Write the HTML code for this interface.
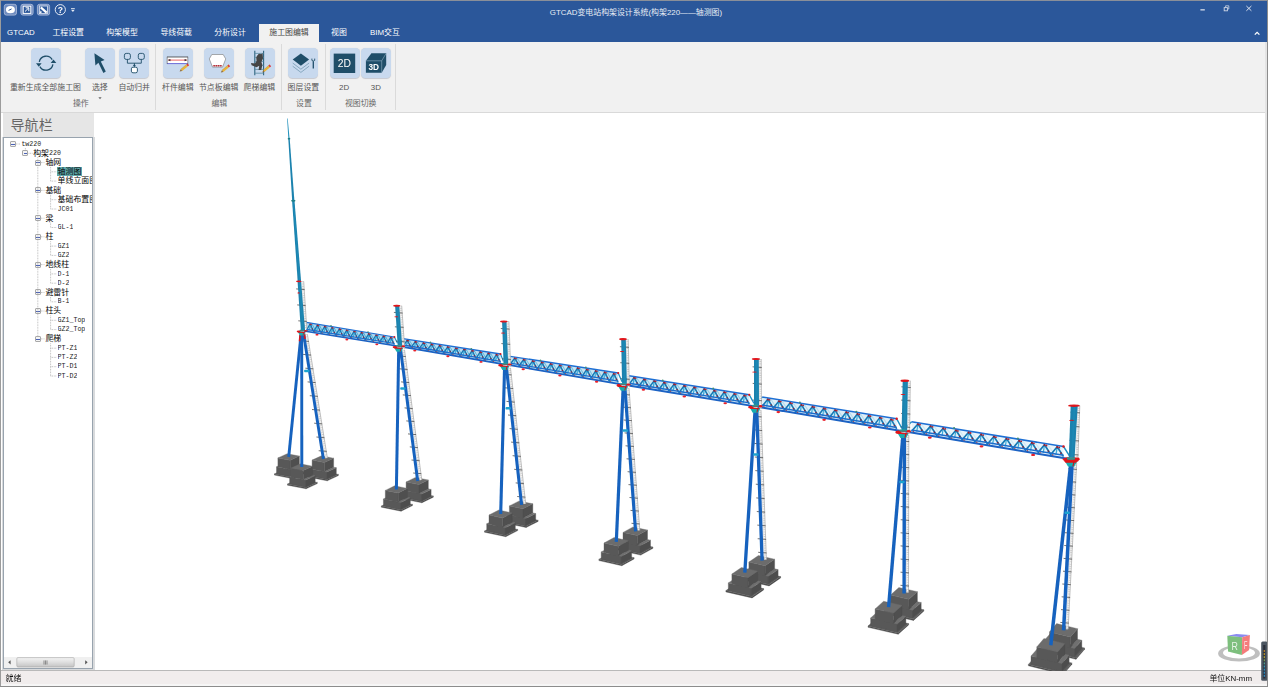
<!DOCTYPE html><html lang="zh-CN"><head><meta charset="utf-8"><title>GTCAD变电站构架设计系统</title><style>
*{box-sizing:border-box;margin:0;padding:0}
html,body{width:1268px;height:687px;overflow:hidden;background:#fff}
body{font-family:"Liberation Sans","Noto Sans CJK SC",sans-serif;font-size:7.9px;color:#444;position:relative;line-height:1}
.abs{position:absolute}
#title{left:0;top:0;width:1268px;height:42px;background:#2b579a}
#topline{left:0;top:0;width:1268px;height:1px;background:#8a8f99}
.tab{position:absolute;top:24px;height:18px;line-height:17.6px;color:#fff;white-space:nowrap;font-size:7.9px}
.tab.act{background:#f1f1f1;color:#444;text-align:center}
#ttl{position:absolute;top:7px;left:436px;width:400px;text-align:center;color:#e8edf5;font-size:7.9px;line-height:11px;white-space:nowrap}
#ribbon{left:1px;top:42px;width:1266px;height:70.8px;background:#f1f1f1;border-bottom:1px solid #d9d9d9}
.ib{position:absolute;top:48px;width:30px;height:30px;border-radius:4.5px;background:#c8d9ee;box-shadow:0 0.6px 0.8px rgba(120,130,150,.35)}
.il{position:absolute;top:81.7px;height:11px;line-height:11px;text-align:center;white-space:nowrap;color:#555;font-size:7.9px}
.gl{position:absolute;top:97.9px;height:11px;line-height:11px;text-align:center;white-space:nowrap;color:#666;font-size:7.9px}
.sep{position:absolute;top:44.4px;width:1px;height:66px;background:#dadada}
#navhead{left:2.5px;top:112.8px;width:91.5px;height:24.7px;background:#e6e6e6}
#navtitle{left:10.5px;top:116px;font-size:14px;line-height:18px;color:#666;white-space:nowrap;letter-spacing:0.1px}
#navbody{left:2px;top:137px;width:93px;height:533px;background:#d8dadc}
#tree{left:3px;top:137px;width:90px;height:532px;background:#fff;border:1px solid #98a3ae;overflow:hidden}
.tr{position:absolute;height:9.3px;line-height:9.3px;font-size:7.9px;color:#000;white-space:nowrap;font-family:"Liberation Mono","Noto Sans CJK SC",monospace}
.tr i{font-style:normal;font-family:"Liberation Mono",monospace;font-size:6.6px;letter-spacing:0;position:relative;top:-0.7px;color:#1a1a1a}
.sel{background:#5fa8ab;margin-left:-0.8px;padding:0 0.9px 0 0.8px}
.eb{position:absolute;width:6px;height:6px;border:0.8px solid #a9a9a9;border-radius:1px;background:#f4f4f4}
.eb:after{content:"";position:absolute;left:0.7px;top:1.9px;width:3.2px;height:0.9px;background:#4a62b8}
#status{left:1px;top:670px;width:1266px;height:16px;background:#f1eded;border-top:1px solid #b9b9b9}
#status2{left:1px;top:683.5px;width:1266px;height:2.5px;background:#f6f6f6}
.st{position:absolute;top:672.5px;height:11px;line-height:11px;font-size:7.9px;color:#111;white-space:nowrap}
#bl{left:0;top:0;width:1px;height:687px;background:#9c9c9c}
#br{left:1267px;top:0;width:1px;height:687px;background:#8c8c8c}
#bb{left:0;top:686px;width:1268px;height:1px;background:#8c8c8c}
#view{left:95px;top:112.8px;width:1170px;height:557.2px;background:#fff}
#rstrip{left:1265px;top:42px;width:2px;height:628px;background:#e4e4e4}
svg{position:absolute;left:0;top:0}
</style></head><body>
<div id="title" class="abs"></div>
<div id="ttl">GTCAD变电站构架设计系统(构架220——轴测图)</div>
<div class="tab" style="left:-9.1px;width:60px;text-align:center">GTCAD</div>
<div class="tab" style="left:38.2px;width:60px;text-align:center">工程设置</div>
<div class="tab" style="left:92.0px;width:60px;text-align:center">构架模型</div>
<div class="tab" style="left:146.2px;width:60px;text-align:center">导线荷载</div>
<div class="tab" style="left:200.1px;width:60px;text-align:center">分析设计</div>
<div class="tab" style="left:308.9px;width:60px;text-align:center">视图</div>
<div class="tab" style="left:355.0px;width:60px;text-align:center">BIM交互</div>
<div class="tab act" style="left:259px;width:60px">施工图编辑</div>
<div id="ribbon" class="abs"></div>
<div class="ib" style="left:31px"></div>
<div class="ib" style="left:85px"></div>
<div class="ib" style="left:119.3px"></div>
<div class="ib" style="left:163px"></div>
<div class="ib" style="left:204px"></div>
<div class="ib" style="left:245px"></div>
<div class="ib" style="left:288.4px"></div>
<div class="ib" style="left:329.5px"></div>
<div class="ib" style="left:361px"></div>
<div class="il" style="left:-4.6px;width:100px">重新生成全部施工图</div>
<div class="il" style="left:49.8px;width:100px">选择</div>
<div class="il" style="left:84.2px;width:100px">自动归并</div>
<div class="il" style="left:127.8px;width:100px">杆件编辑</div>
<div class="il" style="left:168.7px;width:100px">节点板编辑</div>
<div class="il" style="left:209.4px;width:100px">爬梯编辑</div>
<div class="il" style="left:253.4px;width:100px">图层设置</div>
<div class="il" style="left:294.1px;width:100px">2D</div>
<div class="il" style="left:325.8px;width:100px">3D</div>
<div class="gl" style="left:40.8px;width:80px">操作</div>
<div class="gl" style="left:179.3px;width:80px">编辑</div>
<div class="gl" style="left:263.9px;width:80px">设置</div>
<div class="gl" style="left:320.7px;width:80px">视图切换</div>
<div class="sep" style="left:155px"></div>
<div class="sep" style="left:281px"></div>
<div class="sep" style="left:324.5px"></div>
<div class="sep" style="left:394.5px"></div>
<div id="view" class="abs"></div>
<div id="rstrip" class="abs"></div>
<div id="navbody" class="abs"></div>
<div id="navhead" class="abs"></div>
<div id="navtitle" class="abs">导航栏</div>
<div id="tree" class="abs"></div>
<div class="tr" style="left:21.4px;top:139.35px;"><i>tw220</i></div>
<div class="eb" style="left:9.8px;top:141.00px"></div>
<div class="tr" style="left:33.2px;top:148.63px;">构架<i>220</i></div>
<div class="eb" style="left:22.4px;top:150.28px"></div>
<div class="tr" style="left:45.4px;top:157.91px;">轴网</div>
<div class="eb" style="left:34.8px;top:159.56px"></div>
<div class="tr sel" style="left:57.6px;top:167.19px;max-width:34.4px;overflow:hidden;">轴测图</div>
<div class="tr" style="left:57.6px;top:176.47px;max-width:34.4px;overflow:hidden;">单线立面图</div>
<div class="tr" style="left:45.4px;top:185.75px;">基础</div>
<div class="eb" style="left:34.8px;top:187.40px"></div>
<div class="tr" style="left:57.6px;top:195.03px;max-width:34.4px;overflow:hidden;">基础布置图</div>
<div class="tr" style="left:57.6px;top:204.31px;max-width:34.4px;overflow:hidden;"><i>JC01</i></div>
<div class="tr" style="left:45.4px;top:213.59px;">梁</div>
<div class="eb" style="left:34.8px;top:215.24px"></div>
<div class="tr" style="left:57.6px;top:222.87px;max-width:34.4px;overflow:hidden;"><i>GL-1</i></div>
<div class="tr" style="left:45.4px;top:232.15px;">柱</div>
<div class="eb" style="left:34.8px;top:233.80px"></div>
<div class="tr" style="left:57.6px;top:241.43px;max-width:34.4px;overflow:hidden;"><i>GZ1</i></div>
<div class="tr" style="left:57.6px;top:250.71px;max-width:34.4px;overflow:hidden;"><i>GZ2</i></div>
<div class="tr" style="left:45.4px;top:259.99px;">地线柱</div>
<div class="eb" style="left:34.8px;top:261.64px"></div>
<div class="tr" style="left:57.6px;top:269.27px;max-width:34.4px;overflow:hidden;"><i>D-1</i></div>
<div class="tr" style="left:57.6px;top:278.55px;max-width:34.4px;overflow:hidden;"><i>D-2</i></div>
<div class="tr" style="left:45.4px;top:287.83px;">避雷针</div>
<div class="eb" style="left:34.8px;top:289.48px"></div>
<div class="tr" style="left:57.6px;top:297.11px;max-width:34.4px;overflow:hidden;"><i>B-1</i></div>
<div class="tr" style="left:45.4px;top:306.39px;">柱头</div>
<div class="eb" style="left:34.8px;top:308.04px"></div>
<div class="tr" style="left:57.6px;top:315.67px;max-width:34.4px;overflow:hidden;"><i>GZ1_Top</i></div>
<div class="tr" style="left:57.6px;top:324.95px;max-width:34.4px;overflow:hidden;"><i>GZ2_Top</i></div>
<div class="tr" style="left:45.4px;top:334.23px;">爬梯</div>
<div class="eb" style="left:34.8px;top:335.88px"></div>
<div class="tr" style="left:57.6px;top:343.51px;max-width:34.4px;overflow:hidden;"><i>PT-Z1</i></div>
<div class="tr" style="left:57.6px;top:352.79px;max-width:34.4px;overflow:hidden;"><i>PT-Z2</i></div>
<div class="tr" style="left:57.6px;top:362.07px;max-width:34.4px;overflow:hidden;"><i>PT-D1</i></div>
<div class="tr" style="left:57.6px;top:371.35px;max-width:34.4px;overflow:hidden;"><i>PT-D2</i></div>
<div id="status" class="abs"></div><div id="status2" class="abs"></div>
<svg width="1268" height="687" viewBox="0 0 1268 687" >
<clipPath id="vp"><rect x="95" y="112.8" width="1170" height="557.6"/></clipPath><filter id="soft" x="0" y="0" width="1268" height="687" filterUnits="userSpaceOnUse"><feGaussianBlur stdDeviation="0.42"/></filter><g id="scene" clip-path="url(#vp)"><g filter="url(#soft)">
<g><polygon points="274.4,473.9 293.0,477.5 293.0,478.7 274.4,475.1" fill="#4e4e4e" stroke="#4e4e4e" stroke-width="0.35" stroke-linejoin="round"/><polygon points="293.0,477.5 304.2,472.2 304.2,473.5 293.0,478.7" fill="#474747" stroke="#474747" stroke-width="0.35" stroke-linejoin="round"/><polygon points="274.4,473.9 285.7,468.6 304.2,472.2 293.0,477.5" fill="#5c5c5c" stroke="#5c5c5c" stroke-width="0.35" stroke-linejoin="round"/><polygon points="276.5,466.8 292.7,469.9 292.7,476.8 276.5,473.7" fill="#585858" stroke="#585858" stroke-width="0.35" stroke-linejoin="round"/><polygon points="292.7,469.9 302.1,465.6 302.1,472.4 292.7,476.8" fill="#4e4e4e" stroke="#4e4e4e" stroke-width="0.35" stroke-linejoin="round"/><polygon points="276.5,466.8 285.9,462.4 287.3,462.7 277.9,467.1" fill="#707070" stroke="#707070" stroke-width="0.35" stroke-linejoin="round"/><polygon points="290.2,469.5 299.6,465.1 302.1,465.6 292.7,469.9" fill="#707070" stroke="#707070" stroke-width="0.35" stroke-linejoin="round"/><polygon points="277.9,457.9 290.2,460.3 290.2,469.5 277.9,467.1" fill="#595959" stroke="#595959" stroke-width="0.35" stroke-linejoin="round"/><polygon points="290.2,460.3 299.4,456.1 299.4,465.2 290.2,469.5" fill="#4f4f4f" stroke="#4f4f4f" stroke-width="0.35" stroke-linejoin="round"/><polygon points="277.9,457.9 287.2,453.7 299.4,456.1 290.2,460.3" fill="#6c6c6c" stroke="#6c6c6c" stroke-width="0.35" stroke-linejoin="round"/></g>
<g><polygon points="308.6,476.0 327.2,479.6 327.2,480.8 308.6,477.2" fill="#4e4e4e" stroke="#4e4e4e" stroke-width="0.35" stroke-linejoin="round"/><polygon points="327.2,479.6 338.4,474.4 338.4,475.6 327.2,480.8" fill="#474747" stroke="#474747" stroke-width="0.35" stroke-linejoin="round"/><polygon points="308.6,476.0 319.9,470.7 338.4,474.4 327.2,479.6" fill="#5c5c5c" stroke="#5c5c5c" stroke-width="0.35" stroke-linejoin="round"/><polygon points="310.7,468.9 326.9,472.0 326.9,478.9 310.7,475.8" fill="#585858" stroke="#585858" stroke-width="0.35" stroke-linejoin="round"/><polygon points="326.9,472.0 336.3,467.7 336.3,474.5 326.9,478.9" fill="#4e4e4e" stroke="#4e4e4e" stroke-width="0.35" stroke-linejoin="round"/><polygon points="310.7,468.9 320.1,464.5 321.5,464.8 312.1,469.2" fill="#707070" stroke="#707070" stroke-width="0.35" stroke-linejoin="round"/><polygon points="324.4,471.6 333.8,467.2 336.3,467.7 326.9,472.0" fill="#707070" stroke="#707070" stroke-width="0.35" stroke-linejoin="round"/><polygon points="312.1,460.1 324.4,462.4 324.4,471.6 312.1,469.2" fill="#595959" stroke="#595959" stroke-width="0.35" stroke-linejoin="round"/><polygon points="324.4,462.4 333.6,458.2 333.6,467.3 324.4,471.6" fill="#4f4f4f" stroke="#4f4f4f" stroke-width="0.35" stroke-linejoin="round"/><polygon points="312.1,460.1 321.4,455.8 333.6,458.2 324.4,462.4" fill="#6c6c6c" stroke="#6c6c6c" stroke-width="0.35" stroke-linejoin="round"/></g>
<g><polygon points="287.5,484.0 306.1,487.6 306.1,488.8 287.5,485.2" fill="#4e4e4e" stroke="#4e4e4e" stroke-width="0.35" stroke-linejoin="round"/><polygon points="306.1,487.6 317.3,482.4 317.3,483.6 306.1,488.8" fill="#474747" stroke="#474747" stroke-width="0.35" stroke-linejoin="round"/><polygon points="287.5,484.0 298.8,478.7 317.3,482.4 306.1,487.6" fill="#5c5c5c" stroke="#5c5c5c" stroke-width="0.35" stroke-linejoin="round"/><polygon points="289.6,476.9 305.8,480.0 305.8,486.9 289.6,483.8" fill="#585858" stroke="#585858" stroke-width="0.35" stroke-linejoin="round"/><polygon points="305.8,480.0 315.2,475.7 315.2,482.5 305.8,486.9" fill="#4e4e4e" stroke="#4e4e4e" stroke-width="0.35" stroke-linejoin="round"/><polygon points="289.6,476.9 299.0,472.5 300.4,472.8 291.1,477.2" fill="#707070" stroke="#707070" stroke-width="0.35" stroke-linejoin="round"/><polygon points="303.3,479.6 312.7,475.2 315.2,475.7 305.8,480.0" fill="#707070" stroke="#707070" stroke-width="0.35" stroke-linejoin="round"/><polygon points="291.1,468.1 303.3,470.4 303.3,479.6 291.1,477.2" fill="#595959" stroke="#595959" stroke-width="0.35" stroke-linejoin="round"/><polygon points="303.3,470.4 312.6,466.2 312.6,475.3 303.3,479.6" fill="#4f4f4f" stroke="#4f4f4f" stroke-width="0.35" stroke-linejoin="round"/><polygon points="291.1,468.1 300.3,463.8 312.6,466.2 303.3,470.4" fill="#6c6c6c" stroke="#6c6c6c" stroke-width="0.35" stroke-linejoin="round"/></g>
<g><polygon points="402.1,497.7 421.9,501.6 421.9,502.8 402.1,498.8" fill="#4e4e4e" stroke="#4e4e4e" stroke-width="0.35" stroke-linejoin="round"/><polygon points="421.9,501.6 433.3,496.0 433.3,497.2 421.9,502.8" fill="#474747" stroke="#474747" stroke-width="0.35" stroke-linejoin="round"/><polygon points="402.1,497.7 413.5,492.0 433.3,496.0 421.9,501.6" fill="#5c5c5c" stroke="#5c5c5c" stroke-width="0.35" stroke-linejoin="round"/><polygon points="404.2,490.6 421.6,494.1 421.6,500.9 404.2,497.4" fill="#585858" stroke="#585858" stroke-width="0.35" stroke-linejoin="round"/><polygon points="421.6,494.1 431.1,489.4 431.1,496.2 421.6,500.9" fill="#4e4e4e" stroke="#4e4e4e" stroke-width="0.35" stroke-linejoin="round"/><polygon points="404.2,490.6 413.7,485.9 415.6,486.3 406.1,491.0" fill="#707070" stroke="#707070" stroke-width="0.35" stroke-linejoin="round"/><polygon points="419.0,493.6 428.5,488.9 431.1,489.4 421.6,494.1" fill="#707070" stroke="#707070" stroke-width="0.35" stroke-linejoin="round"/><polygon points="406.1,482.0 419.0,484.6 419.0,493.6 406.1,491.0" fill="#595959" stroke="#595959" stroke-width="0.35" stroke-linejoin="round"/><polygon points="419.0,484.6 428.3,480.0 428.3,489.0 419.0,493.6" fill="#4f4f4f" stroke="#4f4f4f" stroke-width="0.35" stroke-linejoin="round"/><polygon points="406.1,482.0 415.4,477.4 428.3,480.0 419.0,484.6" fill="#6c6c6c" stroke="#6c6c6c" stroke-width="0.35" stroke-linejoin="round"/></g>
<g><polygon points="381.3,506.1 401.1,510.0 401.1,511.2 381.3,507.2" fill="#4e4e4e" stroke="#4e4e4e" stroke-width="0.35" stroke-linejoin="round"/><polygon points="401.1,510.0 412.5,504.4 412.5,505.6 401.1,511.2" fill="#474747" stroke="#474747" stroke-width="0.35" stroke-linejoin="round"/><polygon points="381.3,506.1 392.7,500.4 412.5,504.4 401.1,510.0" fill="#5c5c5c" stroke="#5c5c5c" stroke-width="0.35" stroke-linejoin="round"/><polygon points="383.4,499.0 400.8,502.5 400.8,509.3 383.4,505.8" fill="#585858" stroke="#585858" stroke-width="0.35" stroke-linejoin="round"/><polygon points="400.8,502.5 410.3,497.8 410.3,504.6 400.8,509.3" fill="#4e4e4e" stroke="#4e4e4e" stroke-width="0.35" stroke-linejoin="round"/><polygon points="383.4,499.0 392.9,494.3 394.8,494.7 385.3,499.4" fill="#707070" stroke="#707070" stroke-width="0.35" stroke-linejoin="round"/><polygon points="398.2,502.0 407.7,497.3 410.3,497.8 400.8,502.5" fill="#707070" stroke="#707070" stroke-width="0.35" stroke-linejoin="round"/><polygon points="385.3,490.4 398.2,493.0 398.2,502.0 385.3,499.4" fill="#595959" stroke="#595959" stroke-width="0.35" stroke-linejoin="round"/><polygon points="398.2,493.0 407.5,488.4 407.5,497.4 398.2,502.0" fill="#4f4f4f" stroke="#4f4f4f" stroke-width="0.35" stroke-linejoin="round"/><polygon points="385.3,490.4 394.6,485.8 407.5,488.4 398.2,493.0" fill="#6c6c6c" stroke="#6c6c6c" stroke-width="0.35" stroke-linejoin="round"/></g>
<g><polygon points="504.9,521.8 526.1,526.3 526.1,527.5 504.9,523.0" fill="#4e4e4e" stroke="#4e4e4e" stroke-width="0.35" stroke-linejoin="round"/><polygon points="526.1,526.3 538.1,520.2 538.1,521.4 526.1,527.5" fill="#474747" stroke="#474747" stroke-width="0.35" stroke-linejoin="round"/><polygon points="504.9,521.8 516.8,515.7 538.1,520.2 526.1,526.3" fill="#5c5c5c" stroke="#5c5c5c" stroke-width="0.35" stroke-linejoin="round"/><polygon points="507.1,514.6 525.7,518.6 525.7,525.5 507.1,521.5" fill="#585858" stroke="#585858" stroke-width="0.35" stroke-linejoin="round"/><polygon points="525.7,518.6 535.7,513.5 535.7,520.4 525.7,525.5" fill="#4e4e4e" stroke="#4e4e4e" stroke-width="0.35" stroke-linejoin="round"/><polygon points="507.1,514.6 517.1,509.5 519.4,510.0 509.4,515.1" fill="#707070" stroke="#707070" stroke-width="0.35" stroke-linejoin="round"/><polygon points="523.0,518.0 533.0,512.9 535.7,513.5 525.7,518.6" fill="#707070" stroke="#707070" stroke-width="0.35" stroke-linejoin="round"/><polygon points="509.4,505.9 523.0,508.8 523.0,518.0 509.4,515.1" fill="#595959" stroke="#595959" stroke-width="0.35" stroke-linejoin="round"/><polygon points="523.0,508.8 532.8,503.8 532.8,513.0 523.0,518.0" fill="#4f4f4f" stroke="#4f4f4f" stroke-width="0.35" stroke-linejoin="round"/><polygon points="509.4,505.9 519.2,500.9 532.8,503.8 523.0,508.8" fill="#6c6c6c" stroke="#6c6c6c" stroke-width="0.35" stroke-linejoin="round"/></g>
<g><polygon points="484.5,531.0 505.7,535.5 505.7,536.7 484.5,532.2" fill="#4e4e4e" stroke="#4e4e4e" stroke-width="0.35" stroke-linejoin="round"/><polygon points="505.7,535.5 517.7,529.4 517.7,530.6 505.7,536.7" fill="#474747" stroke="#474747" stroke-width="0.35" stroke-linejoin="round"/><polygon points="484.5,531.0 496.4,524.9 517.7,529.4 505.7,535.5" fill="#5c5c5c" stroke="#5c5c5c" stroke-width="0.35" stroke-linejoin="round"/><polygon points="486.7,523.8 505.3,527.8 505.3,534.7 486.7,530.7" fill="#585858" stroke="#585858" stroke-width="0.35" stroke-linejoin="round"/><polygon points="505.3,527.8 515.3,522.7 515.3,529.6 505.3,534.7" fill="#4e4e4e" stroke="#4e4e4e" stroke-width="0.35" stroke-linejoin="round"/><polygon points="486.7,523.8 496.7,518.7 499.0,519.2 489.0,524.3" fill="#707070" stroke="#707070" stroke-width="0.35" stroke-linejoin="round"/><polygon points="502.6,527.2 512.6,522.1 515.3,522.7 505.3,527.8" fill="#707070" stroke="#707070" stroke-width="0.35" stroke-linejoin="round"/><polygon points="489.0,515.0 502.6,518.0 502.6,527.2 489.0,524.3" fill="#595959" stroke="#595959" stroke-width="0.35" stroke-linejoin="round"/><polygon points="502.6,518.0 512.4,513.0 512.4,522.2 502.6,527.2" fill="#4f4f4f" stroke="#4f4f4f" stroke-width="0.35" stroke-linejoin="round"/><polygon points="489.0,515.0 498.8,510.0 512.4,513.0 502.6,518.0" fill="#6c6c6c" stroke="#6c6c6c" stroke-width="0.35" stroke-linejoin="round"/></g>
<g><polygon points="617.8,548.7 640.7,553.8 640.7,555.1 617.8,550.0" fill="#4e4e4e" stroke="#4e4e4e" stroke-width="0.35" stroke-linejoin="round"/><polygon points="640.7,553.8 653.0,547.1 653.0,548.3 640.7,555.1" fill="#474747" stroke="#474747" stroke-width="0.35" stroke-linejoin="round"/><polygon points="617.8,548.7 630.1,542.0 653.0,547.1 640.7,553.8" fill="#5c5c5c" stroke="#5c5c5c" stroke-width="0.35" stroke-linejoin="round"/><polygon points="620.1,541.3 640.2,545.8 640.2,552.9 620.1,548.5" fill="#585858" stroke="#585858" stroke-width="0.35" stroke-linejoin="round"/><polygon points="640.2,545.8 650.5,540.2 650.5,547.3 640.2,552.9" fill="#4e4e4e" stroke="#4e4e4e" stroke-width="0.35" stroke-linejoin="round"/><polygon points="620.1,541.3 630.4,535.7 633.3,536.3 623.0,541.9" fill="#707070" stroke="#707070" stroke-width="0.35" stroke-linejoin="round"/><polygon points="637.4,545.1 647.7,539.5 650.5,540.2 640.2,545.8" fill="#707070" stroke="#707070" stroke-width="0.35" stroke-linejoin="round"/><polygon points="623.0,532.4 637.4,535.6 637.4,545.1 623.0,541.9" fill="#595959" stroke="#595959" stroke-width="0.35" stroke-linejoin="round"/><polygon points="637.4,535.6 647.5,530.1 647.5,539.6 637.4,545.1" fill="#4f4f4f" stroke="#4f4f4f" stroke-width="0.35" stroke-linejoin="round"/><polygon points="623.0,532.4 633.0,526.9 647.5,530.1 637.4,535.6" fill="#6c6c6c" stroke="#6c6c6c" stroke-width="0.35" stroke-linejoin="round"/></g>
<g><polygon points="598.9,559.3 621.8,564.4 621.8,565.7 598.9,560.6" fill="#4e4e4e" stroke="#4e4e4e" stroke-width="0.35" stroke-linejoin="round"/><polygon points="621.8,564.4 634.1,557.7 634.1,558.9 621.8,565.7" fill="#474747" stroke="#474747" stroke-width="0.35" stroke-linejoin="round"/><polygon points="598.9,559.3 611.2,552.6 634.1,557.7 621.8,564.4" fill="#5c5c5c" stroke="#5c5c5c" stroke-width="0.35" stroke-linejoin="round"/><polygon points="601.2,551.9 621.3,556.4 621.3,563.5 601.2,559.1" fill="#585858" stroke="#585858" stroke-width="0.35" stroke-linejoin="round"/><polygon points="621.3,556.4 631.6,550.8 631.6,557.9 621.3,563.5" fill="#4e4e4e" stroke="#4e4e4e" stroke-width="0.35" stroke-linejoin="round"/><polygon points="601.2,551.9 611.5,546.3 614.4,546.9 604.0,552.5" fill="#707070" stroke="#707070" stroke-width="0.35" stroke-linejoin="round"/><polygon points="618.5,555.7 628.8,550.1 631.6,550.8 621.3,556.4" fill="#707070" stroke="#707070" stroke-width="0.35" stroke-linejoin="round"/><polygon points="604.0,543.0 618.5,546.2 618.5,555.7 604.0,552.5" fill="#595959" stroke="#595959" stroke-width="0.35" stroke-linejoin="round"/><polygon points="618.5,546.2 628.5,540.8 628.5,550.2 618.5,555.7" fill="#4f4f4f" stroke="#4f4f4f" stroke-width="0.35" stroke-linejoin="round"/><polygon points="604.0,543.0 614.1,537.5 628.5,540.8 618.5,546.2" fill="#6c6c6c" stroke="#6c6c6c" stroke-width="0.35" stroke-linejoin="round"/></g>
<g><polygon points="742.9,578.6 769.1,584.6 769.1,585.9 742.9,579.9" fill="#4e4e4e" stroke="#4e4e4e" stroke-width="0.35" stroke-linejoin="round"/><polygon points="769.1,584.6 780.6,576.6 780.6,577.9 769.1,585.9" fill="#474747" stroke="#474747" stroke-width="0.35" stroke-linejoin="round"/><polygon points="742.9,578.6 754.5,570.7 780.6,576.6 769.1,584.6" fill="#5c5c5c" stroke="#5c5c5c" stroke-width="0.35" stroke-linejoin="round"/><polygon points="745.3,570.9 768.4,576.2 768.4,583.6 745.3,578.3" fill="#585858" stroke="#585858" stroke-width="0.35" stroke-linejoin="round"/><polygon points="768.4,576.2 778.1,569.6 778.1,576.9 768.4,583.6" fill="#4e4e4e" stroke="#4e4e4e" stroke-width="0.35" stroke-linejoin="round"/><polygon points="745.3,570.9 755.0,564.3 758.6,565.1 748.9,571.8" fill="#707070" stroke="#707070" stroke-width="0.35" stroke-linejoin="round"/><polygon points="765.1,575.5 774.8,568.8 778.1,569.6 768.4,576.2" fill="#707070" stroke="#707070" stroke-width="0.35" stroke-linejoin="round"/><polygon points="748.9,562.0 765.1,565.7 765.1,575.5 748.9,571.8" fill="#595959" stroke="#595959" stroke-width="0.35" stroke-linejoin="round"/><polygon points="765.1,565.7 774.6,559.2 774.6,569.0 765.1,575.5" fill="#4f4f4f" stroke="#4f4f4f" stroke-width="0.35" stroke-linejoin="round"/><polygon points="748.9,562.0 758.4,555.5 774.6,559.2 765.1,565.7" fill="#6c6c6c" stroke="#6c6c6c" stroke-width="0.35" stroke-linejoin="round"/></g>
<g><polygon points="725.9,590.6 752.1,596.6 752.1,597.9 725.9,591.9" fill="#4e4e4e" stroke="#4e4e4e" stroke-width="0.35" stroke-linejoin="round"/><polygon points="752.1,596.6 763.6,588.6 763.6,589.9 752.1,597.9" fill="#474747" stroke="#474747" stroke-width="0.35" stroke-linejoin="round"/><polygon points="725.9,590.6 737.5,582.7 763.6,588.6 752.1,596.6" fill="#5c5c5c" stroke="#5c5c5c" stroke-width="0.35" stroke-linejoin="round"/><polygon points="728.3,582.9 751.4,588.2 751.4,595.6 728.3,590.3" fill="#585858" stroke="#585858" stroke-width="0.35" stroke-linejoin="round"/><polygon points="751.4,588.2 761.1,581.6 761.1,588.9 751.4,595.6" fill="#4e4e4e" stroke="#4e4e4e" stroke-width="0.35" stroke-linejoin="round"/><polygon points="728.3,582.9 738.0,576.3 741.6,577.1 731.9,583.8" fill="#707070" stroke="#707070" stroke-width="0.35" stroke-linejoin="round"/><polygon points="748.1,587.5 757.8,580.8 761.1,581.6 751.4,588.2" fill="#707070" stroke="#707070" stroke-width="0.35" stroke-linejoin="round"/><polygon points="731.9,574.0 748.1,577.7 748.1,587.5 731.9,583.8" fill="#595959" stroke="#595959" stroke-width="0.35" stroke-linejoin="round"/><polygon points="748.1,577.7 757.6,571.2 757.6,581.0 748.1,587.5" fill="#4f4f4f" stroke="#4f4f4f" stroke-width="0.35" stroke-linejoin="round"/><polygon points="731.9,574.0 741.4,567.5 757.6,571.2 748.1,577.7" fill="#6c6c6c" stroke="#6c6c6c" stroke-width="0.35" stroke-linejoin="round"/></g>
<g><polygon points="883.3,612.2 913.5,619.1 913.5,620.4 883.3,613.5" fill="#4e4e4e" stroke="#4e4e4e" stroke-width="0.35" stroke-linejoin="round"/><polygon points="913.5,619.1 923.9,609.8 923.9,611.1 913.5,620.4" fill="#474747" stroke="#474747" stroke-width="0.35" stroke-linejoin="round"/><polygon points="883.3,612.2 893.7,602.9 923.9,609.8 913.5,619.1" fill="#5c5c5c" stroke="#5c5c5c" stroke-width="0.35" stroke-linejoin="round"/><polygon points="885.9,604.2 912.5,610.3 912.5,617.9 885.9,611.8" fill="#585858" stroke="#585858" stroke-width="0.35" stroke-linejoin="round"/><polygon points="912.5,610.3 921.2,602.5 921.2,610.2 912.5,617.9" fill="#4e4e4e" stroke="#4e4e4e" stroke-width="0.35" stroke-linejoin="round"/><polygon points="885.9,604.2 894.5,596.4 899.1,597.5 890.4,605.2" fill="#707070" stroke="#707070" stroke-width="0.35" stroke-linejoin="round"/><polygon points="908.9,609.4 917.5,601.7 921.2,602.5 912.5,610.3" fill="#707070" stroke="#707070" stroke-width="0.35" stroke-linejoin="round"/><polygon points="890.4,595.1 908.9,599.3 908.9,609.4 890.4,605.2" fill="#595959" stroke="#595959" stroke-width="0.35" stroke-linejoin="round"/><polygon points="908.9,599.3 917.4,591.7 917.4,601.8 908.9,609.4" fill="#4f4f4f" stroke="#4f4f4f" stroke-width="0.35" stroke-linejoin="round"/><polygon points="890.4,595.1 898.9,587.5 917.4,591.7 908.9,599.3" fill="#6c6c6c" stroke="#6c6c6c" stroke-width="0.35" stroke-linejoin="round"/></g>
<g><polygon points="868.0,626.0 898.2,632.9 898.2,634.2 868.0,627.3" fill="#4e4e4e" stroke="#4e4e4e" stroke-width="0.35" stroke-linejoin="round"/><polygon points="898.2,632.9 908.6,623.6 908.6,624.9 898.2,634.2" fill="#474747" stroke="#474747" stroke-width="0.35" stroke-linejoin="round"/><polygon points="868.0,626.0 878.4,616.7 908.6,623.6 898.2,632.9" fill="#5c5c5c" stroke="#5c5c5c" stroke-width="0.35" stroke-linejoin="round"/><polygon points="870.6,618.0 897.2,624.1 897.2,631.7 870.6,625.6" fill="#585858" stroke="#585858" stroke-width="0.35" stroke-linejoin="round"/><polygon points="897.2,624.1 905.9,616.3 905.9,624.0 897.2,631.7" fill="#4e4e4e" stroke="#4e4e4e" stroke-width="0.35" stroke-linejoin="round"/><polygon points="870.6,618.0 879.2,610.2 883.8,611.3 875.1,619.0" fill="#707070" stroke="#707070" stroke-width="0.35" stroke-linejoin="round"/><polygon points="893.6,623.2 902.2,615.5 905.9,616.3 897.2,624.1" fill="#707070" stroke="#707070" stroke-width="0.35" stroke-linejoin="round"/><polygon points="875.1,608.9 893.6,613.1 893.6,623.2 875.1,619.0" fill="#595959" stroke="#595959" stroke-width="0.35" stroke-linejoin="round"/><polygon points="893.6,613.1 902.1,605.5 902.1,615.6 893.6,623.2" fill="#4f4f4f" stroke="#4f4f4f" stroke-width="0.35" stroke-linejoin="round"/><polygon points="875.1,608.9 883.6,601.3 902.1,605.5 893.6,613.1" fill="#6c6c6c" stroke="#6c6c6c" stroke-width="0.35" stroke-linejoin="round"/></g>
<g><polygon points="1041.1,649.4 1076.0,657.9 1076.0,659.3 1041.1,650.8" fill="#4e4e4e" stroke="#4e4e4e" stroke-width="0.35" stroke-linejoin="round"/><polygon points="1076.0,657.9 1084.6,647.9 1084.6,649.3 1076.0,659.3" fill="#474747" stroke="#474747" stroke-width="0.35" stroke-linejoin="round"/><polygon points="1041.1,649.4 1049.8,639.4 1084.6,647.9 1076.0,657.9" fill="#5c5c5c" stroke="#5c5c5c" stroke-width="0.35" stroke-linejoin="round"/><polygon points="1043.7,641.0 1074.6,648.6 1074.6,656.6 1043.7,649.0" fill="#585858" stroke="#585858" stroke-width="0.35" stroke-linejoin="round"/><polygon points="1074.6,648.6 1081.8,640.2 1081.8,648.2 1074.6,656.6" fill="#4e4e4e" stroke="#4e4e4e" stroke-width="0.35" stroke-linejoin="round"/><polygon points="1043.7,641.0 1051.0,632.7 1056.7,634.1 1049.5,642.5" fill="#707070" stroke="#707070" stroke-width="0.35" stroke-linejoin="round"/><polygon points="1070.4,647.5 1077.6,639.2 1081.8,640.2 1074.6,648.6" fill="#707070" stroke="#707070" stroke-width="0.35" stroke-linejoin="round"/><polygon points="1049.5,631.9 1070.4,636.9 1070.4,647.5 1049.5,642.5" fill="#595959" stroke="#595959" stroke-width="0.35" stroke-linejoin="round"/><polygon points="1070.4,636.9 1077.5,628.7 1077.5,639.3 1070.4,647.5" fill="#4f4f4f" stroke="#4f4f4f" stroke-width="0.35" stroke-linejoin="round"/><polygon points="1049.5,631.9 1056.6,623.6 1077.5,628.7 1070.4,636.9" fill="#6c6c6c" stroke="#6c6c6c" stroke-width="0.35" stroke-linejoin="round"/></g>
<g><polygon points="1028.4,664.4 1063.3,672.9 1063.3,674.3 1028.4,665.8" fill="#4e4e4e" stroke="#4e4e4e" stroke-width="0.35" stroke-linejoin="round"/><polygon points="1063.3,672.9 1071.9,662.9 1071.9,664.3 1063.3,674.3" fill="#474747" stroke="#474747" stroke-width="0.35" stroke-linejoin="round"/><polygon points="1028.4,664.4 1037.1,654.4 1071.9,662.9 1063.3,672.9" fill="#5c5c5c" stroke="#5c5c5c" stroke-width="0.35" stroke-linejoin="round"/><polygon points="1031.0,656.0 1061.9,663.6 1061.9,671.6 1031.0,664.0" fill="#585858" stroke="#585858" stroke-width="0.35" stroke-linejoin="round"/><polygon points="1061.9,663.6 1069.1,655.2 1069.1,663.2 1061.9,671.6" fill="#4e4e4e" stroke="#4e4e4e" stroke-width="0.35" stroke-linejoin="round"/><polygon points="1031.0,656.0 1038.3,647.7 1044.0,649.1 1036.8,657.5" fill="#707070" stroke="#707070" stroke-width="0.35" stroke-linejoin="round"/><polygon points="1057.7,662.5 1064.9,654.2 1069.1,655.2 1061.9,663.6" fill="#707070" stroke="#707070" stroke-width="0.35" stroke-linejoin="round"/><polygon points="1036.8,646.9 1057.7,651.9 1057.7,662.5 1036.8,657.5" fill="#595959" stroke="#595959" stroke-width="0.35" stroke-linejoin="round"/><polygon points="1057.7,651.9 1064.8,643.7 1064.8,654.3 1057.7,662.5" fill="#4f4f4f" stroke="#4f4f4f" stroke-width="0.35" stroke-linejoin="round"/><polygon points="1036.8,646.9 1043.9,638.6 1064.8,643.7 1057.7,651.9" fill="#6c6c6c" stroke="#6c6c6c" stroke-width="0.35" stroke-linejoin="round"/></g>
<line x1="301.2" y1="332.8" x2="288.7" y2="457.0" stroke="#1762be" stroke-width="2.9"/>
<line x1="306.4" y1="334.3" x2="326.4" y2="458.1" stroke="#f6f6f6" stroke-width="2.0"/><line x1="306.4" y1="334.3" x2="326.4" y2="458.1" stroke="#c4c4c4" stroke-width="2.0" stroke-dasharray="0.6 1.7"/><line x1="305.4" y1="334.3" x2="325.4" y2="458.1" stroke="#cfcfcf" stroke-width="0.5"/><line x1="307.4" y1="334.3" x2="327.4" y2="458.1" stroke="#a8a8a8" stroke-width="0.7"/><line x1="300.9" y1="340.7" x2="308.9" y2="341.4" stroke="#484848" stroke-width="0.9" opacity="0.85"/><line x1="303.1" y1="354.4" x2="311.1" y2="355.1" stroke="#484848" stroke-width="0.9" opacity="0.85"/><line x1="305.4" y1="368.2" x2="313.4" y2="368.9" stroke="#484848" stroke-width="0.9" opacity="0.85"/><line x1="307.6" y1="381.9" x2="315.6" y2="382.6" stroke="#484848" stroke-width="0.9" opacity="0.85"/><line x1="309.8" y1="395.7" x2="317.8" y2="396.4" stroke="#484848" stroke-width="0.9" opacity="0.85"/><line x1="312.0" y1="409.5" x2="320.0" y2="410.2" stroke="#484848" stroke-width="0.9" opacity="0.85"/><line x1="314.2" y1="423.2" x2="322.2" y2="423.9" stroke="#484848" stroke-width="0.9" opacity="0.85"/><line x1="316.4" y1="437.0" x2="324.4" y2="437.7" stroke="#484848" stroke-width="0.9" opacity="0.85"/><line x1="318.7" y1="450.7" x2="326.7" y2="451.4" stroke="#484848" stroke-width="0.9" opacity="0.85"/>
<line x1="303.4" y1="332.8" x2="323.4" y2="459.1" stroke="#1762be" stroke-width="2.9"/>
<line x1="301.7" y1="332.8" x2="301.8" y2="467.1" stroke="#1762be" stroke-width="2.9"/>
<rect x="304.1" y="369.7" width="5.4" height="2.5" rx="0.9" fill="#1fa3cf"/>
<line x1="300.1" y1="334.8" x2="299.5" y2="341.3" stroke="#d01820" stroke-width="1.6"/>
<line x1="304.2" y1="332.8" x2="305.0" y2="338.8" stroke="#d01820" stroke-width="1.8"/>
<line x1="403.5" y1="349.8" x2="420.8" y2="480.0" stroke="#f6f6f6" stroke-width="2.0"/><line x1="403.5" y1="349.8" x2="420.8" y2="480.0" stroke="#c4c4c4" stroke-width="2.0" stroke-dasharray="0.6 1.7"/><line x1="402.5" y1="349.8" x2="419.8" y2="480.0" stroke="#cfcfcf" stroke-width="0.5"/><line x1="404.5" y1="349.8" x2="421.8" y2="480.0" stroke="#a8a8a8" stroke-width="0.7"/><line x1="397.7" y1="355.8" x2="405.7" y2="356.5" stroke="#484848" stroke-width="0.9" opacity="0.85"/><line x1="399.4" y1="368.8" x2="407.5" y2="369.5" stroke="#484848" stroke-width="0.9" opacity="0.85"/><line x1="401.1" y1="381.9" x2="409.2" y2="382.6" stroke="#484848" stroke-width="0.9" opacity="0.85"/><line x1="402.8" y1="394.9" x2="410.9" y2="395.6" stroke="#484848" stroke-width="0.9" opacity="0.85"/><line x1="404.6" y1="407.9" x2="412.7" y2="408.6" stroke="#484848" stroke-width="0.9" opacity="0.85"/><line x1="406.3" y1="420.9" x2="414.4" y2="421.6" stroke="#484848" stroke-width="0.9" opacity="0.85"/><line x1="408.0" y1="433.9" x2="416.1" y2="434.6" stroke="#484848" stroke-width="0.9" opacity="0.85"/><line x1="409.8" y1="446.9" x2="417.8" y2="447.6" stroke="#484848" stroke-width="0.9" opacity="0.85"/><line x1="411.5" y1="460.0" x2="419.6" y2="460.7" stroke="#484848" stroke-width="0.9" opacity="0.85"/><line x1="413.2" y1="473.0" x2="421.3" y2="473.7" stroke="#484848" stroke-width="0.9" opacity="0.85"/>
<line x1="400.4" y1="348.3" x2="417.7" y2="481.0" stroke="#1762be" stroke-width="3.0"/>
<line x1="398.7" y1="348.3" x2="396.4" y2="489.4" stroke="#1762be" stroke-width="3.0"/>
<rect x="400.2" y="387.2" width="5.4" height="2.5" rx="0.9" fill="#1fa3cf"/>
<line x1="509.5" y1="367.9" x2="524.7" y2="503.8" stroke="#f6f6f6" stroke-width="2.0"/><line x1="509.5" y1="367.9" x2="524.7" y2="503.8" stroke="#c4c4c4" stroke-width="2.0" stroke-dasharray="0.6 1.7"/><line x1="508.5" y1="367.9" x2="523.7" y2="503.8" stroke="#cfcfcf" stroke-width="0.5"/><line x1="510.5" y1="367.9" x2="525.7" y2="503.8" stroke="#a8a8a8" stroke-width="0.7"/><line x1="503.5" y1="374.2" x2="511.6" y2="374.9" stroke="#484848" stroke-width="0.9" opacity="0.85"/><line x1="505.0" y1="387.8" x2="513.2" y2="388.5" stroke="#484848" stroke-width="0.9" opacity="0.85"/><line x1="506.5" y1="401.4" x2="514.7" y2="402.1" stroke="#484848" stroke-width="0.9" opacity="0.85"/><line x1="508.0" y1="415.0" x2="516.2" y2="415.7" stroke="#484848" stroke-width="0.9" opacity="0.85"/><line x1="509.6" y1="428.6" x2="517.7" y2="429.3" stroke="#484848" stroke-width="0.9" opacity="0.85"/><line x1="511.1" y1="442.1" x2="519.3" y2="442.8" stroke="#484848" stroke-width="0.9" opacity="0.85"/><line x1="512.6" y1="455.7" x2="520.8" y2="456.4" stroke="#484848" stroke-width="0.9" opacity="0.85"/><line x1="514.2" y1="469.3" x2="522.3" y2="470.0" stroke="#484848" stroke-width="0.9" opacity="0.85"/><line x1="515.7" y1="482.9" x2="523.8" y2="483.6" stroke="#484848" stroke-width="0.9" opacity="0.85"/><line x1="517.2" y1="496.5" x2="525.4" y2="497.2" stroke="#484848" stroke-width="0.9" opacity="0.85"/>
<line x1="506.3" y1="366.4" x2="521.6" y2="504.8" stroke="#1762be" stroke-width="3.1"/>
<line x1="504.6" y1="366.4" x2="500.7" y2="514.0" stroke="#1762be" stroke-width="3.1"/>
<rect x="505.5" y="407.1" width="5.4" height="2.5" rx="0.9" fill="#1fa3cf"/>
<line x1="628.0" y1="388.2" x2="638.8" y2="530.3" stroke="#f6f6f6" stroke-width="2.0"/><line x1="628.0" y1="388.2" x2="638.8" y2="530.3" stroke="#c4c4c4" stroke-width="2.0" stroke-dasharray="0.6 1.7"/><line x1="627.0" y1="388.2" x2="637.8" y2="530.3" stroke="#cfcfcf" stroke-width="0.5"/><line x1="629.0" y1="388.2" x2="639.8" y2="530.3" stroke="#a8a8a8" stroke-width="0.7"/><line x1="621.7" y1="394.2" x2="629.9" y2="394.9" stroke="#484848" stroke-width="0.9" opacity="0.85"/><line x1="622.7" y1="407.1" x2="630.9" y2="407.8" stroke="#484848" stroke-width="0.9" opacity="0.85"/><line x1="623.6" y1="420.0" x2="631.9" y2="420.7" stroke="#484848" stroke-width="0.9" opacity="0.85"/><line x1="624.6" y1="432.9" x2="632.9" y2="433.6" stroke="#484848" stroke-width="0.9" opacity="0.85"/><line x1="625.6" y1="445.8" x2="633.8" y2="446.5" stroke="#484848" stroke-width="0.9" opacity="0.85"/><line x1="626.6" y1="458.8" x2="634.8" y2="459.4" stroke="#484848" stroke-width="0.9" opacity="0.85"/><line x1="627.6" y1="471.7" x2="635.8" y2="472.4" stroke="#484848" stroke-width="0.9" opacity="0.85"/><line x1="628.5" y1="484.6" x2="636.8" y2="485.3" stroke="#484848" stroke-width="0.9" opacity="0.85"/><line x1="629.5" y1="497.5" x2="637.8" y2="498.2" stroke="#484848" stroke-width="0.9" opacity="0.85"/><line x1="630.5" y1="510.4" x2="638.8" y2="511.1" stroke="#484848" stroke-width="0.9" opacity="0.85"/><line x1="631.5" y1="523.3" x2="639.7" y2="524.0" stroke="#484848" stroke-width="0.9" opacity="0.85"/>
<line x1="624.8" y1="386.7" x2="635.6" y2="531.3" stroke="#1762be" stroke-width="3.2"/>
<line x1="623.2" y1="386.7" x2="616.3" y2="541.9" stroke="#1762be" stroke-width="3.2"/>
<rect x="622.7" y="429.3" width="5.4" height="2.5" rx="0.9" fill="#1fa3cf"/>
<line x1="760.0" y1="409.9" x2="765.4" y2="559.6" stroke="#f6f6f6" stroke-width="2.0"/><line x1="760.0" y1="409.9" x2="765.4" y2="559.6" stroke="#c4c4c4" stroke-width="2.0" stroke-dasharray="0.6 1.7"/><line x1="759.0" y1="409.9" x2="764.4" y2="559.6" stroke="#cfcfcf" stroke-width="0.5"/><line x1="761.0" y1="409.9" x2="766.4" y2="559.6" stroke="#a8a8a8" stroke-width="0.7"/><line x1="753.3" y1="416.2" x2="761.6" y2="416.9" stroke="#484848" stroke-width="0.9" opacity="0.85"/><line x1="753.8" y1="429.8" x2="762.1" y2="430.5" stroke="#484848" stroke-width="0.9" opacity="0.85"/><line x1="754.3" y1="443.4" x2="762.6" y2="444.1" stroke="#484848" stroke-width="0.9" opacity="0.85"/><line x1="754.8" y1="457.0" x2="763.1" y2="457.7" stroke="#484848" stroke-width="0.9" opacity="0.85"/><line x1="755.3" y1="470.6" x2="763.6" y2="471.3" stroke="#484848" stroke-width="0.9" opacity="0.85"/><line x1="755.8" y1="484.2" x2="764.1" y2="484.9" stroke="#484848" stroke-width="0.9" opacity="0.85"/><line x1="756.3" y1="497.9" x2="764.6" y2="498.6" stroke="#484848" stroke-width="0.9" opacity="0.85"/><line x1="756.8" y1="511.5" x2="765.1" y2="512.2" stroke="#484848" stroke-width="0.9" opacity="0.85"/><line x1="757.3" y1="525.1" x2="765.6" y2="525.8" stroke="#484848" stroke-width="0.9" opacity="0.85"/><line x1="757.7" y1="538.7" x2="766.1" y2="539.4" stroke="#484848" stroke-width="0.9" opacity="0.85"/><line x1="758.2" y1="552.3" x2="766.6" y2="553.0" stroke="#484848" stroke-width="0.9" opacity="0.85"/>
<line x1="756.7" y1="408.4" x2="762.1" y2="560.6" stroke="#1762be" stroke-width="3.3"/>
<line x1="755.2" y1="408.4" x2="744.8" y2="572.6" stroke="#1762be" stroke-width="3.3"/>
<rect x="753.1" y="453.3" width="5.4" height="2.5" rx="0.9" fill="#1fa3cf"/>
<line x1="907.8" y1="434.8" x2="907.5" y2="592.4" stroke="#f6f6f6" stroke-width="2.0"/><line x1="907.8" y1="434.8" x2="907.5" y2="592.4" stroke="#c4c4c4" stroke-width="2.0" stroke-dasharray="0.6 1.7"/><line x1="906.8" y1="434.8" x2="906.5" y2="592.4" stroke="#cfcfcf" stroke-width="0.5"/><line x1="908.8" y1="434.8" x2="908.5" y2="592.4" stroke="#a8a8a8" stroke-width="0.7"/><line x1="900.8" y1="440.9" x2="909.2" y2="441.6" stroke="#484848" stroke-width="0.9" opacity="0.85"/><line x1="900.8" y1="454.0" x2="909.2" y2="454.7" stroke="#484848" stroke-width="0.9" opacity="0.85"/><line x1="900.8" y1="467.1" x2="909.2" y2="467.8" stroke="#484848" stroke-width="0.9" opacity="0.85"/><line x1="900.7" y1="480.3" x2="909.1" y2="481.0" stroke="#484848" stroke-width="0.9" opacity="0.85"/><line x1="900.7" y1="493.4" x2="909.1" y2="494.1" stroke="#484848" stroke-width="0.9" opacity="0.85"/><line x1="900.7" y1="506.5" x2="909.1" y2="507.2" stroke="#484848" stroke-width="0.9" opacity="0.85"/><line x1="900.7" y1="519.7" x2="909.1" y2="520.4" stroke="#484848" stroke-width="0.9" opacity="0.85"/><line x1="900.6" y1="532.8" x2="909.0" y2="533.5" stroke="#484848" stroke-width="0.9" opacity="0.85"/><line x1="900.6" y1="545.9" x2="909.0" y2="546.6" stroke="#484848" stroke-width="0.9" opacity="0.85"/><line x1="900.6" y1="559.1" x2="909.0" y2="559.8" stroke="#484848" stroke-width="0.9" opacity="0.85"/><line x1="900.5" y1="572.2" x2="908.9" y2="572.9" stroke="#484848" stroke-width="0.9" opacity="0.85"/><line x1="900.5" y1="585.3" x2="908.9" y2="586.0" stroke="#484848" stroke-width="0.9" opacity="0.85"/>
<line x1="904.4" y1="433.3" x2="904.1" y2="593.4" stroke="#1762be" stroke-width="3.4"/>
<line x1="903.1" y1="433.3" x2="888.6" y2="607.2" stroke="#1762be" stroke-width="3.4"/>
<rect x="899.2" y="480.7" width="5.4" height="2.5" rx="0.9" fill="#1fa3cf"/>
<line x1="1075.7" y1="462.8" x2="1067.1" y2="629.3" stroke="#f6f6f6" stroke-width="2.0"/><line x1="1075.7" y1="462.8" x2="1067.1" y2="629.3" stroke="#c4c4c4" stroke-width="2.0" stroke-dasharray="0.6 1.7"/><line x1="1074.7" y1="462.8" x2="1066.1" y2="629.3" stroke="#cfcfcf" stroke-width="0.5"/><line x1="1076.7" y1="462.8" x2="1068.1" y2="629.3" stroke="#a8a8a8" stroke-width="0.7"/><line x1="1068.3" y1="468.7" x2="1076.8" y2="469.4" stroke="#484848" stroke-width="0.9" opacity="0.85"/><line x1="1067.6" y1="481.5" x2="1076.1" y2="482.2" stroke="#484848" stroke-width="0.9" opacity="0.85"/><line x1="1067.0" y1="494.3" x2="1075.4" y2="495.0" stroke="#484848" stroke-width="0.9" opacity="0.85"/><line x1="1066.3" y1="507.1" x2="1074.8" y2="507.8" stroke="#484848" stroke-width="0.9" opacity="0.85"/><line x1="1065.6" y1="519.9" x2="1074.1" y2="520.6" stroke="#484848" stroke-width="0.9" opacity="0.85"/><line x1="1065.0" y1="532.7" x2="1073.5" y2="533.4" stroke="#484848" stroke-width="0.9" opacity="0.85"/><line x1="1064.3" y1="545.5" x2="1072.8" y2="546.2" stroke="#484848" stroke-width="0.9" opacity="0.85"/><line x1="1063.6" y1="558.4" x2="1072.1" y2="559.1" stroke="#484848" stroke-width="0.9" opacity="0.85"/><line x1="1063.0" y1="571.2" x2="1071.5" y2="571.9" stroke="#484848" stroke-width="0.9" opacity="0.85"/><line x1="1062.3" y1="584.0" x2="1070.8" y2="584.7" stroke="#484848" stroke-width="0.9" opacity="0.85"/><line x1="1061.7" y1="596.8" x2="1070.1" y2="597.5" stroke="#484848" stroke-width="0.9" opacity="0.85"/><line x1="1061.0" y1="609.6" x2="1069.5" y2="610.3" stroke="#484848" stroke-width="0.9" opacity="0.85"/><line x1="1060.3" y1="622.4" x2="1068.8" y2="623.1" stroke="#484848" stroke-width="0.9" opacity="0.85"/>
<line x1="1072.2" y1="461.3" x2="1063.6" y2="630.3" stroke="#1762be" stroke-width="3.5"/>
<line x1="1071.0" y1="461.3" x2="1050.8" y2="645.3" stroke="#1762be" stroke-width="3.5"/>
<rect x="1064.5" y="511.5" width="5.4" height="2.5" rx="0.9" fill="#1fa3cf"/>
<polygon points="306.4,322.3 394.4,337.0 394.4,345.6 306.4,331.5" fill="#7fbfe0" opacity="0.62"/><polyline points="308.6,330.4 312.3,324.4 315.9,331.6 319.6,325.6 323.3,332.7 326.9,326.8 330.6,333.9 334.3,328.0 337.9,335.1 341.6,329.3 345.3,336.3 348.9,330.5 352.6,337.5 356.3,331.7 359.9,338.7 363.6,332.9 367.3,339.8 370.9,334.1 374.6,341.0 378.3,335.3 381.9,342.2 385.6,336.6 389.3,343.4 392.9,337.8" fill="none" stroke="#35a6d6" stroke-width="0.90" opacity="0.9" stroke-linejoin="round"/><line x1="310.1" y1="324.2" x2="309.3" y2="330.5" stroke="#38aada" stroke-width="0.90"/><line x1="317.4" y1="325.4" x2="316.7" y2="331.7" stroke="#38aada" stroke-width="0.90"/><line x1="324.7" y1="326.6" x2="324.0" y2="332.9" stroke="#38aada" stroke-width="0.90"/><line x1="332.1" y1="327.8" x2="331.3" y2="334.0" stroke="#38aada" stroke-width="0.90"/><line x1="339.4" y1="329.1" x2="338.7" y2="335.2" stroke="#38aada" stroke-width="0.90"/><line x1="346.7" y1="330.3" x2="346.0" y2="336.4" stroke="#38aada" stroke-width="0.90"/><line x1="354.1" y1="331.5" x2="353.3" y2="337.6" stroke="#38aada" stroke-width="0.90"/><line x1="361.4" y1="332.7" x2="360.7" y2="338.8" stroke="#38aada" stroke-width="0.90"/><line x1="368.7" y1="333.9" x2="368.0" y2="340.0" stroke="#38aada" stroke-width="0.90"/><line x1="376.1" y1="335.2" x2="375.3" y2="341.1" stroke="#38aada" stroke-width="0.90"/><line x1="383.4" y1="336.4" x2="382.7" y2="342.3" stroke="#38aada" stroke-width="0.90"/><line x1="390.7" y1="337.6" x2="390.0" y2="343.5" stroke="#38aada" stroke-width="0.90"/><polyline points="306.4,330.4 310.1,324.0 313.7,331.6 317.4,325.2 321.1,332.7 324.7,326.4 328.4,333.9 332.1,327.7 335.7,335.1 339.4,328.9 343.1,336.3 346.7,330.1 350.4,337.5 354.1,331.3 357.7,338.6 361.4,332.5 365.1,339.8 368.7,333.8 372.4,341.0 376.1,335.0 379.7,342.2 383.4,336.2 387.1,343.4 390.7,337.4 394.4,344.6" fill="none" stroke="#187ab4" stroke-width="1.30" opacity="1.0" stroke-linejoin="round"/><line x1="394.4" y1="337.0" x2="397.5" y2="343.3" stroke="#1b8fc4" stroke-width="1.10"/><line x1="306.4" y1="322.3" x2="303.5" y2="327.8" stroke="#1b8fc4" stroke-width="1.10"/><line x1="306.4" y1="322.3" x2="394.4" y2="337.0" stroke="#1f6fd4" stroke-width="1.20"/><line x1="306.4" y1="329.3" x2="394.4" y2="343.5" stroke="#1f6ecc" stroke-width="1.20"/><line x1="304.0" y1="331.1" x2="397.0" y2="346.0" stroke="#1a62c4" stroke-width="1.56"/><circle cx="310.1" cy="324.2" r="0.80" fill="#a01c2c"/><circle cx="311.2" cy="324.5" r="0.70" fill="#b02030"/><circle cx="312.3" cy="328.9" r="0.70" fill="#8a2338" opacity="0.9"/><circle cx="307.5" cy="330.6" r="0.60" fill="#933040" opacity="0.8"/><circle cx="317.4" cy="325.4" r="0.80" fill="#a01c2c"/><circle cx="318.6" cy="325.7" r="0.70" fill="#b02030"/><circle cx="319.6" cy="330.1" r="0.70" fill="#8a2338" opacity="0.9"/><circle cx="314.8" cy="331.7" r="0.60" fill="#933040" opacity="0.8"/><circle cx="324.7" cy="326.6" r="0.80" fill="#a01c2c"/><circle cx="325.9" cy="326.9" r="0.70" fill="#b02030"/><circle cx="326.9" cy="331.3" r="0.70" fill="#8a2338" opacity="0.9"/><circle cx="322.2" cy="332.9" r="0.60" fill="#933040" opacity="0.8"/><circle cx="332.1" cy="327.8" r="0.80" fill="#a01c2c"/><circle cx="333.2" cy="328.1" r="0.70" fill="#b02030"/><circle cx="334.3" cy="332.5" r="0.70" fill="#8a2338" opacity="0.9"/><circle cx="329.5" cy="334.1" r="0.60" fill="#933040" opacity="0.8"/><circle cx="339.4" cy="329.1" r="0.80" fill="#a01c2c"/><circle cx="340.6" cy="329.4" r="0.70" fill="#b02030"/><circle cx="341.6" cy="333.7" r="0.70" fill="#8a2338" opacity="0.9"/><circle cx="336.8" cy="335.3" r="0.60" fill="#933040" opacity="0.8"/><circle cx="346.7" cy="330.3" r="0.80" fill="#a01c2c"/><circle cx="347.9" cy="330.6" r="0.70" fill="#b02030"/><circle cx="348.9" cy="334.9" r="0.70" fill="#8a2338" opacity="0.9"/><circle cx="344.2" cy="336.5" r="0.60" fill="#933040" opacity="0.8"/><circle cx="354.1" cy="331.5" r="0.80" fill="#a01c2c"/><circle cx="355.2" cy="331.8" r="0.70" fill="#b02030"/><circle cx="356.3" cy="336.1" r="0.70" fill="#8a2338" opacity="0.9"/><circle cx="351.5" cy="337.6" r="0.60" fill="#933040" opacity="0.8"/><circle cx="361.4" cy="332.7" r="0.80" fill="#a01c2c"/><circle cx="362.6" cy="333.0" r="0.70" fill="#b02030"/><circle cx="363.6" cy="337.3" r="0.70" fill="#8a2338" opacity="0.9"/><circle cx="358.8" cy="338.8" r="0.60" fill="#933040" opacity="0.8"/><circle cx="368.7" cy="333.9" r="0.80" fill="#a01c2c"/><circle cx="369.9" cy="334.2" r="0.70" fill="#b02030"/><circle cx="370.9" cy="338.5" r="0.70" fill="#8a2338" opacity="0.9"/><circle cx="366.2" cy="340.0" r="0.60" fill="#933040" opacity="0.8"/><circle cx="376.1" cy="335.2" r="0.80" fill="#a01c2c"/><circle cx="377.2" cy="335.4" r="0.70" fill="#b02030"/><circle cx="378.3" cy="339.7" r="0.70" fill="#8a2338" opacity="0.9"/><circle cx="373.5" cy="341.2" r="0.60" fill="#933040" opacity="0.8"/><circle cx="383.4" cy="336.4" r="0.80" fill="#a01c2c"/><circle cx="384.6" cy="336.7" r="0.70" fill="#b02030"/><circle cx="385.6" cy="340.9" r="0.70" fill="#8a2338" opacity="0.9"/><circle cx="380.8" cy="342.4" r="0.60" fill="#933040" opacity="0.8"/><circle cx="390.7" cy="337.6" r="0.80" fill="#a01c2c"/><circle cx="391.9" cy="337.9" r="0.70" fill="#b02030"/><circle cx="392.9" cy="342.1" r="0.70" fill="#8a2338" opacity="0.9"/><circle cx="388.2" cy="343.5" r="0.60" fill="#933040" opacity="0.8"/><ellipse cx="317.0" cy="334.7" rx="1.50" ry="0.90" fill="#e8202a"/><ellipse cx="346.9" cy="339.5" rx="1.50" ry="0.90" fill="#e8202a"/><ellipse cx="376.8" cy="344.3" rx="1.50" ry="0.90" fill="#e8202a"/><circle cx="331.0" cy="325.8" r="0.80" fill="#3f8f74"/><circle cx="368.0" cy="332.0" r="0.80" fill="#3f8f74"/><circle cx="394.4" cy="337.0" r="0.95" fill="#e0141a"/>
<polygon points="403.1,338.7 500.5,354.0 500.5,363.7 403.1,347.0" fill="#7fbfe0" opacity="0.53"/><polyline points="405.5,346.1 409.6,340.7 413.7,347.4 417.7,342.0 421.8,348.8 425.8,343.3 429.9,350.2 433.9,344.6 438.0,351.6 442.1,345.9 446.1,352.9 450.2,347.2 454.2,354.3 458.3,348.5 462.4,355.7 466.4,349.7 470.5,357.1 474.5,351.0 478.6,358.4 482.6,352.3 486.7,359.8 490.8,353.6 494.8,361.2 498.9,354.9" fill="none" stroke="#35a6d6" stroke-width="0.95" opacity="0.74" stroke-linejoin="round"/><line x1="407.2" y1="340.5" x2="406.3" y2="346.2" stroke="#38aada" stroke-width="0.95"/><line x1="415.3" y1="341.8" x2="414.5" y2="347.6" stroke="#38aada" stroke-width="0.95"/><line x1="423.4" y1="343.1" x2="422.6" y2="348.9" stroke="#38aada" stroke-width="0.95"/><line x1="431.5" y1="344.4" x2="430.7" y2="350.3" stroke="#38aada" stroke-width="0.95"/><line x1="439.6" y1="345.7" x2="438.8" y2="351.7" stroke="#38aada" stroke-width="0.95"/><line x1="447.7" y1="347.0" x2="446.9" y2="353.1" stroke="#38aada" stroke-width="0.95"/><line x1="455.9" y1="348.3" x2="455.0" y2="354.4" stroke="#38aada" stroke-width="0.95"/><line x1="464.0" y1="349.5" x2="463.2" y2="355.8" stroke="#38aada" stroke-width="0.95"/><line x1="472.1" y1="350.8" x2="471.3" y2="357.2" stroke="#38aada" stroke-width="0.95"/><line x1="480.2" y1="352.1" x2="479.4" y2="358.6" stroke="#38aada" stroke-width="0.95"/><line x1="488.3" y1="353.4" x2="487.5" y2="359.9" stroke="#38aada" stroke-width="0.95"/><line x1="496.4" y1="354.7" x2="495.6" y2="361.3" stroke="#38aada" stroke-width="0.95"/><polyline points="403.1,346.0 407.2,340.3 411.2,347.3 415.3,341.6 419.3,348.7 423.4,342.9 427.4,350.1 431.5,344.2 435.6,351.5 439.6,345.5 443.7,352.9 447.7,346.8 451.8,354.2 455.9,348.1 459.9,355.6 464.0,349.4 468.0,357.0 472.1,350.7 476.1,358.4 480.2,351.9 484.3,359.8 488.3,353.2 492.4,361.1 496.4,354.5 500.5,362.5" fill="none" stroke="#187ab4" stroke-width="1.38" opacity="1.0" stroke-linejoin="round"/><line x1="500.5" y1="354.0" x2="503.4" y2="361.4" stroke="#1b8fc4" stroke-width="1.17"/><line x1="403.1" y1="338.7" x2="400.5" y2="343.3" stroke="#1b8fc4" stroke-width="1.17"/><line x1="403.1" y1="338.7" x2="500.5" y2="354.0" stroke="#1f6fd4" stroke-width="1.27"/><line x1="403.1" y1="345.0" x2="500.5" y2="361.4" stroke="#1f6ecc" stroke-width="1.27"/><line x1="401.0" y1="346.6" x2="502.9" y2="364.1" stroke="#1a62c4" stroke-width="1.65"/><circle cx="407.2" cy="340.5" r="0.85" fill="#a01c2c"/><circle cx="408.5" cy="340.8" r="0.74" fill="#b02030"/><circle cx="409.6" cy="344.9" r="0.74" fill="#8a2338" opacity="0.9"/><circle cx="404.3" cy="346.2" r="0.64" fill="#933040" opacity="0.8"/><circle cx="415.3" cy="341.8" r="0.85" fill="#a01c2c"/><circle cx="416.6" cy="342.1" r="0.74" fill="#b02030"/><circle cx="417.7" cy="346.2" r="0.74" fill="#8a2338" opacity="0.9"/><circle cx="412.4" cy="347.6" r="0.64" fill="#933040" opacity="0.8"/><circle cx="423.4" cy="343.1" r="0.85" fill="#a01c2c"/><circle cx="424.7" cy="343.4" r="0.74" fill="#b02030"/><circle cx="425.8" cy="347.6" r="0.74" fill="#8a2338" opacity="0.9"/><circle cx="420.6" cy="348.9" r="0.64" fill="#933040" opacity="0.8"/><circle cx="431.5" cy="344.4" r="0.85" fill="#a01c2c"/><circle cx="432.8" cy="344.7" r="0.74" fill="#b02030"/><circle cx="433.9" cy="348.9" r="0.74" fill="#8a2338" opacity="0.9"/><circle cx="428.7" cy="350.3" r="0.64" fill="#933040" opacity="0.8"/><circle cx="439.6" cy="345.7" r="0.85" fill="#a01c2c"/><circle cx="440.9" cy="346.0" r="0.74" fill="#b02030"/><circle cx="442.1" cy="350.3" r="0.74" fill="#8a2338" opacity="0.9"/><circle cx="436.8" cy="351.7" r="0.64" fill="#933040" opacity="0.8"/><circle cx="447.7" cy="347.0" r="0.85" fill="#a01c2c"/><circle cx="449.0" cy="347.3" r="0.74" fill="#b02030"/><circle cx="450.2" cy="351.6" r="0.74" fill="#8a2338" opacity="0.9"/><circle cx="444.9" cy="353.1" r="0.64" fill="#933040" opacity="0.8"/><circle cx="455.9" cy="348.3" r="0.85" fill="#a01c2c"/><circle cx="457.2" cy="348.5" r="0.74" fill="#b02030"/><circle cx="458.3" cy="353.0" r="0.74" fill="#8a2338" opacity="0.9"/><circle cx="453.0" cy="354.5" r="0.64" fill="#933040" opacity="0.8"/><circle cx="464.0" cy="349.5" r="0.85" fill="#a01c2c"/><circle cx="465.3" cy="349.8" r="0.74" fill="#b02030"/><circle cx="466.4" cy="354.3" r="0.74" fill="#8a2338" opacity="0.9"/><circle cx="461.1" cy="355.8" r="0.64" fill="#933040" opacity="0.8"/><circle cx="472.1" cy="350.8" r="0.85" fill="#a01c2c"/><circle cx="473.4" cy="351.1" r="0.74" fill="#b02030"/><circle cx="474.5" cy="355.7" r="0.74" fill="#8a2338" opacity="0.9"/><circle cx="469.3" cy="357.2" r="0.64" fill="#933040" opacity="0.8"/><circle cx="480.2" cy="352.1" r="0.85" fill="#a01c2c"/><circle cx="481.5" cy="352.4" r="0.74" fill="#b02030"/><circle cx="482.6" cy="357.0" r="0.74" fill="#8a2338" opacity="0.9"/><circle cx="477.4" cy="358.6" r="0.64" fill="#933040" opacity="0.8"/><circle cx="488.3" cy="353.4" r="0.85" fill="#a01c2c"/><circle cx="489.6" cy="353.7" r="0.74" fill="#b02030"/><circle cx="490.8" cy="358.4" r="0.74" fill="#8a2338" opacity="0.9"/><circle cx="485.5" cy="360.0" r="0.64" fill="#933040" opacity="0.8"/><circle cx="496.4" cy="354.7" r="0.85" fill="#a01c2c"/><circle cx="497.7" cy="355.0" r="0.74" fill="#b02030"/><circle cx="498.9" cy="359.7" r="0.74" fill="#8a2338" opacity="0.9"/><circle cx="493.6" cy="361.4" r="0.64" fill="#933040" opacity="0.8"/><ellipse cx="414.8" cy="350.6" rx="1.59" ry="0.95" fill="#e8202a"/><ellipse cx="447.9" cy="356.2" rx="1.59" ry="0.95" fill="#e8202a"/><ellipse cx="481.0" cy="361.9" rx="1.59" ry="0.95" fill="#e8202a"/><circle cx="430.4" cy="342.4" r="0.85" fill="#3f8f74"/><circle cx="471.3" cy="348.8" r="0.85" fill="#3f8f74"/><circle cx="500.5" cy="354.0" r="1.01" fill="#e0141a"/>
<polygon points="510.2,356.3 618.2,373.0 618.2,383.8 510.2,365.3" fill="#7fbfe0" opacity="0.44"/><polyline points="512.9,364.3 517.4,358.5 521.9,365.8 526.4,359.9 530.9,367.3 535.4,361.3 539.9,368.9 544.4,362.7 548.9,370.4 553.4,364.1 557.9,371.9 562.4,365.6 566.9,373.4 571.4,367.0 575.9,374.9 580.4,368.4 584.9,376.5 589.4,369.8 593.9,378.0 598.4,371.2 602.9,379.5 607.4,372.6 611.9,381.0 616.4,374.0" fill="none" stroke="#35a6d6" stroke-width="1.01" opacity="0.5800000000000001" stroke-linejoin="round"/><line x1="514.7" y1="358.3" x2="513.8" y2="364.4" stroke="#38aada" stroke-width="1.01"/><line x1="523.7" y1="359.7" x2="522.8" y2="366.0" stroke="#38aada" stroke-width="1.01"/><line x1="532.7" y1="361.1" x2="531.8" y2="367.5" stroke="#38aada" stroke-width="1.01"/><line x1="541.7" y1="362.5" x2="540.8" y2="369.0" stroke="#38aada" stroke-width="1.01"/><line x1="550.7" y1="363.9" x2="549.8" y2="370.5" stroke="#38aada" stroke-width="1.01"/><line x1="559.7" y1="365.3" x2="558.8" y2="372.1" stroke="#38aada" stroke-width="1.01"/><line x1="568.7" y1="366.7" x2="567.8" y2="373.6" stroke="#38aada" stroke-width="1.01"/><line x1="577.7" y1="368.2" x2="576.8" y2="375.1" stroke="#38aada" stroke-width="1.01"/><line x1="586.7" y1="369.6" x2="585.8" y2="376.6" stroke="#38aada" stroke-width="1.01"/><line x1="595.7" y1="371.0" x2="594.8" y2="378.1" stroke="#38aada" stroke-width="1.01"/><line x1="604.7" y1="372.4" x2="603.8" y2="379.7" stroke="#38aada" stroke-width="1.01"/><line x1="613.7" y1="373.8" x2="612.8" y2="381.2" stroke="#38aada" stroke-width="1.01"/><polyline points="510.2,364.2 514.7,358.1 519.2,365.7 523.7,359.5 528.2,367.2 532.7,360.9 537.2,368.8 541.7,362.3 546.2,370.3 550.7,363.7 555.2,371.8 559.7,365.1 564.2,373.4 568.7,366.5 573.2,374.9 577.7,368.0 582.2,376.4 586.7,369.4 591.2,377.9 595.7,370.8 600.2,379.5 604.7,372.2 609.2,381.0 613.7,373.6 618.2,382.5" fill="none" stroke="#187ab4" stroke-width="1.46" opacity="1.0" stroke-linejoin="round"/><line x1="618.2" y1="373.0" x2="622.0" y2="381.7" stroke="#1b8fc4" stroke-width="1.23"/><line x1="510.2" y1="356.3" x2="506.4" y2="361.4" stroke="#1b8fc4" stroke-width="1.23"/><line x1="510.2" y1="356.3" x2="618.2" y2="373.0" stroke="#1f6fd4" stroke-width="1.34"/><line x1="510.2" y1="363.1" x2="618.2" y2="381.2" stroke="#1f6ecc" stroke-width="1.34"/><line x1="506.9" y1="364.7" x2="621.5" y2="384.4" stroke="#1a62c4" stroke-width="1.75"/><circle cx="514.7" cy="358.3" r="0.90" fill="#a01c2c"/><circle cx="516.1" cy="358.6" r="0.78" fill="#b02030"/><circle cx="517.4" cy="363.1" r="0.78" fill="#8a2338" opacity="0.9"/><circle cx="511.6" cy="364.4" r="0.67" fill="#933040" opacity="0.8"/><circle cx="523.7" cy="359.7" r="0.90" fill="#a01c2c"/><circle cx="525.1" cy="360.0" r="0.78" fill="#b02030"/><circle cx="526.4" cy="364.5" r="0.78" fill="#8a2338" opacity="0.9"/><circle cx="520.5" cy="365.9" r="0.67" fill="#933040" opacity="0.8"/><circle cx="532.7" cy="361.1" r="0.90" fill="#a01c2c"/><circle cx="534.1" cy="361.4" r="0.78" fill="#b02030"/><circle cx="535.4" cy="366.0" r="0.78" fill="#8a2338" opacity="0.9"/><circle cx="529.5" cy="367.5" r="0.67" fill="#933040" opacity="0.8"/><circle cx="541.7" cy="362.5" r="0.90" fill="#a01c2c"/><circle cx="543.1" cy="362.8" r="0.78" fill="#b02030"/><circle cx="544.4" cy="367.5" r="0.78" fill="#8a2338" opacity="0.9"/><circle cx="538.5" cy="369.0" r="0.67" fill="#933040" opacity="0.8"/><circle cx="550.7" cy="363.9" r="0.90" fill="#a01c2c"/><circle cx="552.1" cy="364.2" r="0.78" fill="#b02030"/><circle cx="553.4" cy="369.0" r="0.78" fill="#8a2338" opacity="0.9"/><circle cx="547.6" cy="370.5" r="0.67" fill="#933040" opacity="0.8"/><circle cx="559.7" cy="365.3" r="0.90" fill="#a01c2c"/><circle cx="561.1" cy="365.7" r="0.78" fill="#b02030"/><circle cx="562.4" cy="370.5" r="0.78" fill="#8a2338" opacity="0.9"/><circle cx="556.6" cy="372.1" r="0.67" fill="#933040" opacity="0.8"/><circle cx="568.7" cy="366.7" r="0.90" fill="#a01c2c"/><circle cx="570.1" cy="367.1" r="0.78" fill="#b02030"/><circle cx="571.4" cy="372.0" r="0.78" fill="#8a2338" opacity="0.9"/><circle cx="565.6" cy="373.6" r="0.67" fill="#933040" opacity="0.8"/><circle cx="577.7" cy="368.2" r="0.90" fill="#a01c2c"/><circle cx="579.1" cy="368.5" r="0.78" fill="#b02030"/><circle cx="580.4" cy="373.5" r="0.78" fill="#8a2338" opacity="0.9"/><circle cx="574.5" cy="375.1" r="0.67" fill="#933040" opacity="0.8"/><circle cx="586.7" cy="369.6" r="0.90" fill="#a01c2c"/><circle cx="588.1" cy="369.9" r="0.78" fill="#b02030"/><circle cx="589.4" cy="375.0" r="0.78" fill="#8a2338" opacity="0.9"/><circle cx="583.6" cy="376.6" r="0.67" fill="#933040" opacity="0.8"/><circle cx="595.7" cy="371.0" r="0.90" fill="#a01c2c"/><circle cx="597.1" cy="371.3" r="0.78" fill="#b02030"/><circle cx="598.4" cy="376.4" r="0.78" fill="#8a2338" opacity="0.9"/><circle cx="592.6" cy="378.2" r="0.67" fill="#933040" opacity="0.8"/><circle cx="604.7" cy="372.4" r="0.90" fill="#a01c2c"/><circle cx="606.1" cy="372.7" r="0.78" fill="#b02030"/><circle cx="607.4" cy="377.9" r="0.78" fill="#8a2338" opacity="0.9"/><circle cx="601.6" cy="379.7" r="0.67" fill="#933040" opacity="0.8"/><circle cx="613.7" cy="373.8" r="0.90" fill="#a01c2c"/><circle cx="615.1" cy="374.1" r="0.78" fill="#b02030"/><circle cx="616.4" cy="379.4" r="0.78" fill="#8a2338" opacity="0.9"/><circle cx="610.6" cy="381.2" r="0.67" fill="#933040" opacity="0.8"/><ellipse cx="523.2" cy="369.2" rx="1.68" ry="1.01" fill="#e8202a"/><ellipse cx="559.9" cy="375.5" rx="1.68" ry="1.01" fill="#e8202a"/><ellipse cx="596.6" cy="381.8" rx="1.68" ry="1.01" fill="#e8202a"/><circle cx="540.4" cy="360.4" r="0.90" fill="#3f8f74"/><circle cx="585.8" cy="367.4" r="0.90" fill="#3f8f74"/><circle cx="618.2" cy="373.0" r="1.06" fill="#e0141a"/>
<polygon points="629.0,375.7 749.3,394.8 749.3,405.4 629.0,385.6" fill="#7fbfe0" opacity="0.35"/><polyline points="632.0,384.5 637.0,378.2 642.0,386.1 647.0,379.8 652.1,387.8 657.1,381.4 662.1,389.4 667.1,383.0 672.1,391.1 677.1,384.6 682.1,392.7 687.1,386.2 692.2,394.3 697.2,387.8 702.2,396.0 707.2,389.4 712.2,397.6 717.2,391.0 722.2,399.3 727.2,392.6 732.3,400.9 737.3,394.2 742.3,402.6 747.3,395.8" fill="none" stroke="#35a6d6" stroke-width="1.06" opacity="0.42000000000000004" stroke-linejoin="round"/><line x1="634.0" y1="377.9" x2="633.0" y2="384.7" stroke="#38aada" stroke-width="1.06"/><line x1="644.0" y1="379.5" x2="643.0" y2="386.3" stroke="#38aada" stroke-width="1.06"/><line x1="654.1" y1="381.1" x2="653.1" y2="387.9" stroke="#38aada" stroke-width="1.06"/><line x1="664.1" y1="382.7" x2="663.1" y2="389.6" stroke="#38aada" stroke-width="1.06"/><line x1="674.1" y1="384.3" x2="673.1" y2="391.2" stroke="#38aada" stroke-width="1.06"/><line x1="684.1" y1="385.9" x2="683.1" y2="392.9" stroke="#38aada" stroke-width="1.06"/><line x1="694.2" y1="387.5" x2="693.2" y2="394.5" stroke="#38aada" stroke-width="1.06"/><line x1="704.2" y1="389.1" x2="703.2" y2="396.2" stroke="#38aada" stroke-width="1.06"/><line x1="714.2" y1="390.7" x2="713.2" y2="397.8" stroke="#38aada" stroke-width="1.06"/><line x1="724.2" y1="392.3" x2="723.2" y2="399.4" stroke="#38aada" stroke-width="1.06"/><line x1="734.3" y1="393.9" x2="733.3" y2="401.1" stroke="#38aada" stroke-width="1.06"/><line x1="744.3" y1="395.5" x2="743.3" y2="402.7" stroke="#38aada" stroke-width="1.06"/><polyline points="629.0,384.4 634.0,377.7 639.0,386.0 644.0,379.3 649.0,387.7 654.1,380.9 659.1,389.3 664.1,382.5 669.1,391.0 674.1,384.1 679.1,392.6 684.1,385.7 689.1,394.3 694.2,387.3 699.2,395.9 704.2,388.9 709.2,397.6 714.2,390.5 719.2,399.2 724.2,392.1 729.2,400.8 734.3,393.7 739.3,402.5 744.3,395.3 749.3,404.1" fill="none" stroke="#187ab4" stroke-width="1.53" opacity="1.0" stroke-linejoin="round"/><line x1="749.3" y1="394.8" x2="754.0" y2="403.4" stroke="#1b8fc4" stroke-width="1.30"/><line x1="629.0" y1="375.7" x2="625.0" y2="381.7" stroke="#1b8fc4" stroke-width="1.30"/><line x1="629.0" y1="375.7" x2="749.3" y2="394.8" stroke="#1f6fd4" stroke-width="1.42"/><line x1="629.0" y1="383.2" x2="749.3" y2="402.9" stroke="#1f6ecc" stroke-width="1.42"/><line x1="625.5" y1="385.0" x2="753.5" y2="406.1" stroke="#1a62c4" stroke-width="1.84"/><circle cx="634.0" cy="377.9" r="0.94" fill="#a01c2c"/><circle cx="635.6" cy="378.2" r="0.83" fill="#b02030"/><circle cx="637.0" cy="383.1" r="0.83" fill="#8a2338" opacity="0.9"/><circle cx="630.5" cy="384.6" r="0.71" fill="#933040" opacity="0.8"/><circle cx="644.0" cy="379.5" r="0.94" fill="#a01c2c"/><circle cx="645.6" cy="379.8" r="0.83" fill="#b02030"/><circle cx="647.0" cy="384.8" r="0.83" fill="#8a2338" opacity="0.9"/><circle cx="640.5" cy="386.3" r="0.71" fill="#933040" opacity="0.8"/><circle cx="654.1" cy="381.1" r="0.94" fill="#a01c2c"/><circle cx="655.7" cy="381.4" r="0.83" fill="#b02030"/><circle cx="657.1" cy="386.4" r="0.83" fill="#8a2338" opacity="0.9"/><circle cx="650.6" cy="387.9" r="0.71" fill="#933040" opacity="0.8"/><circle cx="664.1" cy="382.7" r="0.94" fill="#a01c2c"/><circle cx="665.7" cy="383.0" r="0.83" fill="#b02030"/><circle cx="667.1" cy="388.0" r="0.83" fill="#8a2338" opacity="0.9"/><circle cx="660.6" cy="389.6" r="0.71" fill="#933040" opacity="0.8"/><circle cx="674.1" cy="384.3" r="0.94" fill="#a01c2c"/><circle cx="675.7" cy="384.6" r="0.83" fill="#b02030"/><circle cx="677.1" cy="389.6" r="0.83" fill="#8a2338" opacity="0.9"/><circle cx="670.6" cy="391.2" r="0.71" fill="#933040" opacity="0.8"/><circle cx="684.1" cy="385.9" r="0.94" fill="#a01c2c"/><circle cx="685.7" cy="386.2" r="0.83" fill="#b02030"/><circle cx="687.1" cy="391.3" r="0.83" fill="#8a2338" opacity="0.9"/><circle cx="680.6" cy="392.9" r="0.71" fill="#933040" opacity="0.8"/><circle cx="694.2" cy="387.5" r="0.94" fill="#a01c2c"/><circle cx="695.8" cy="387.8" r="0.83" fill="#b02030"/><circle cx="697.2" cy="392.9" r="0.83" fill="#8a2338" opacity="0.9"/><circle cx="690.7" cy="394.5" r="0.71" fill="#933040" opacity="0.8"/><circle cx="704.2" cy="389.1" r="0.94" fill="#a01c2c"/><circle cx="705.8" cy="389.4" r="0.83" fill="#b02030"/><circle cx="707.2" cy="394.5" r="0.83" fill="#8a2338" opacity="0.9"/><circle cx="700.7" cy="396.2" r="0.71" fill="#933040" opacity="0.8"/><circle cx="714.2" cy="390.7" r="0.94" fill="#a01c2c"/><circle cx="715.8" cy="391.0" r="0.83" fill="#b02030"/><circle cx="717.2" cy="396.2" r="0.83" fill="#8a2338" opacity="0.9"/><circle cx="710.7" cy="397.8" r="0.71" fill="#933040" opacity="0.8"/><circle cx="724.2" cy="392.3" r="0.94" fill="#a01c2c"/><circle cx="725.8" cy="392.6" r="0.83" fill="#b02030"/><circle cx="727.2" cy="397.8" r="0.83" fill="#8a2338" opacity="0.9"/><circle cx="720.7" cy="399.4" r="0.71" fill="#933040" opacity="0.8"/><circle cx="734.3" cy="393.9" r="0.94" fill="#a01c2c"/><circle cx="735.9" cy="394.2" r="0.83" fill="#b02030"/><circle cx="737.3" cy="399.4" r="0.83" fill="#8a2338" opacity="0.9"/><circle cx="730.8" cy="401.1" r="0.71" fill="#933040" opacity="0.8"/><circle cx="744.3" cy="395.5" r="0.94" fill="#a01c2c"/><circle cx="745.9" cy="395.8" r="0.83" fill="#b02030"/><circle cx="747.3" cy="401.1" r="0.83" fill="#8a2338" opacity="0.9"/><circle cx="740.8" cy="402.7" r="0.71" fill="#933040" opacity="0.8"/><ellipse cx="643.4" cy="389.7" rx="1.77" ry="1.06" fill="#e8202a"/><ellipse cx="684.3" cy="396.5" rx="1.77" ry="1.06" fill="#e8202a"/><ellipse cx="725.2" cy="403.2" rx="1.77" ry="1.06" fill="#e8202a"/><circle cx="662.7" cy="380.4" r="0.94" fill="#3f8f74"/><circle cx="713.2" cy="388.5" r="0.94" fill="#3f8f74"/><circle cx="749.3" cy="394.8" r="1.12" fill="#e0141a"/>
<polygon points="762.2,397.0 896.7,418.8 896.7,430.2 762.2,407.5" fill="#7fbfe0" opacity="0.26"/><polyline points="765.6,406.4 771.2,399.7 776.8,408.3 782.4,401.5 788.0,410.1 793.6,403.4 799.2,412.0 804.8,405.2 810.4,413.9 816.0,407.0 821.6,415.8 827.2,408.8 832.8,417.7 838.4,410.7 844.0,419.5 849.6,412.5 855.2,421.4 860.8,414.3 866.4,423.3 872.0,416.2 877.6,425.2 883.2,418.0 888.9,427.1 894.5,419.8" fill="none" stroke="#35a6d6" stroke-width="1.12" opacity="0.26" stroke-linejoin="round"/><line x1="767.8" y1="399.4" x2="766.7" y2="406.6" stroke="#38aada" stroke-width="1.12"/><line x1="779.0" y1="401.2" x2="777.9" y2="408.4" stroke="#38aada" stroke-width="1.12"/><line x1="790.2" y1="403.0" x2="789.1" y2="410.3" stroke="#38aada" stroke-width="1.12"/><line x1="801.4" y1="404.9" x2="800.3" y2="412.2" stroke="#38aada" stroke-width="1.12"/><line x1="812.6" y1="406.7" x2="811.5" y2="414.1" stroke="#38aada" stroke-width="1.12"/><line x1="823.8" y1="408.5" x2="822.7" y2="416.0" stroke="#38aada" stroke-width="1.12"/><line x1="835.1" y1="410.3" x2="833.9" y2="417.9" stroke="#38aada" stroke-width="1.12"/><line x1="846.3" y1="412.2" x2="845.1" y2="419.7" stroke="#38aada" stroke-width="1.12"/><line x1="857.5" y1="414.0" x2="856.4" y2="421.6" stroke="#38aada" stroke-width="1.12"/><line x1="868.7" y1="415.8" x2="867.6" y2="423.5" stroke="#38aada" stroke-width="1.12"/><line x1="879.9" y1="417.7" x2="878.8" y2="425.4" stroke="#38aada" stroke-width="1.12"/><line x1="891.1" y1="419.5" x2="890.0" y2="427.3" stroke="#38aada" stroke-width="1.12"/><polyline points="762.2,406.2 767.8,399.2 773.4,408.1 779.0,401.0 784.6,410.0 790.2,402.8 795.8,411.9 801.4,404.6 807.0,413.8 812.6,406.5 818.2,415.7 823.8,408.3 829.5,417.5 835.1,410.1 840.7,419.4 846.3,412.0 851.9,421.3 857.5,413.8 863.1,423.2 868.7,415.6 874.3,425.1 879.9,417.4 885.5,427.0 891.1,419.3 896.7,428.8" fill="none" stroke="#187ab4" stroke-width="1.61" opacity="1.0" stroke-linejoin="round"/><line x1="896.7" y1="418.8" x2="901.9" y2="428.3" stroke="#1b8fc4" stroke-width="1.36"/><line x1="762.2" y1="397.0" x2="757.0" y2="403.4" stroke="#1b8fc4" stroke-width="1.36"/><line x1="762.2" y1="397.0" x2="896.7" y2="418.8" stroke="#1f6fd4" stroke-width="1.49"/><line x1="762.2" y1="405.0" x2="896.7" y2="427.5" stroke="#1f6ecc" stroke-width="1.49"/><line x1="757.5" y1="406.7" x2="901.4" y2="431.0" stroke="#1a62c4" stroke-width="1.93"/><circle cx="767.8" cy="399.4" r="0.99" fill="#a01c2c"/><circle cx="769.6" cy="399.8" r="0.87" fill="#b02030"/><circle cx="771.2" cy="405.0" r="0.87" fill="#8a2338" opacity="0.9"/><circle cx="763.9" cy="406.5" r="0.74" fill="#933040" opacity="0.8"/><circle cx="779.0" cy="401.2" r="0.99" fill="#a01c2c"/><circle cx="780.8" cy="401.6" r="0.87" fill="#b02030"/><circle cx="782.4" cy="406.9" r="0.87" fill="#8a2338" opacity="0.9"/><circle cx="775.1" cy="408.4" r="0.74" fill="#933040" opacity="0.8"/><circle cx="790.2" cy="403.0" r="0.99" fill="#a01c2c"/><circle cx="792.0" cy="403.4" r="0.87" fill="#b02030"/><circle cx="793.6" cy="408.7" r="0.87" fill="#8a2338" opacity="0.9"/><circle cx="786.3" cy="410.3" r="0.74" fill="#933040" opacity="0.8"/><circle cx="801.4" cy="404.9" r="0.99" fill="#a01c2c"/><circle cx="803.2" cy="405.3" r="0.87" fill="#b02030"/><circle cx="804.8" cy="410.6" r="0.87" fill="#8a2338" opacity="0.9"/><circle cx="797.5" cy="412.2" r="0.74" fill="#933040" opacity="0.8"/><circle cx="812.6" cy="406.7" r="0.99" fill="#a01c2c"/><circle cx="814.4" cy="407.1" r="0.87" fill="#b02030"/><circle cx="816.0" cy="412.5" r="0.87" fill="#8a2338" opacity="0.9"/><circle cx="808.7" cy="414.1" r="0.74" fill="#933040" opacity="0.8"/><circle cx="823.8" cy="408.5" r="0.99" fill="#a01c2c"/><circle cx="825.6" cy="408.9" r="0.87" fill="#b02030"/><circle cx="827.2" cy="414.3" r="0.87" fill="#8a2338" opacity="0.9"/><circle cx="819.9" cy="415.9" r="0.74" fill="#933040" opacity="0.8"/><circle cx="835.1" cy="410.3" r="0.99" fill="#a01c2c"/><circle cx="836.8" cy="410.7" r="0.87" fill="#b02030"/><circle cx="838.4" cy="416.2" r="0.87" fill="#8a2338" opacity="0.9"/><circle cx="831.1" cy="417.8" r="0.74" fill="#933040" opacity="0.8"/><circle cx="846.3" cy="412.2" r="0.99" fill="#a01c2c"/><circle cx="848.1" cy="412.6" r="0.87" fill="#b02030"/><circle cx="849.6" cy="418.0" r="0.87" fill="#8a2338" opacity="0.9"/><circle cx="842.3" cy="419.7" r="0.74" fill="#933040" opacity="0.8"/><circle cx="857.5" cy="414.0" r="0.99" fill="#a01c2c"/><circle cx="859.3" cy="414.4" r="0.87" fill="#b02030"/><circle cx="860.8" cy="419.9" r="0.87" fill="#8a2338" opacity="0.9"/><circle cx="853.5" cy="421.6" r="0.74" fill="#933040" opacity="0.8"/><circle cx="868.7" cy="415.8" r="0.99" fill="#a01c2c"/><circle cx="870.5" cy="416.2" r="0.87" fill="#b02030"/><circle cx="872.0" cy="421.8" r="0.87" fill="#8a2338" opacity="0.9"/><circle cx="864.8" cy="423.5" r="0.74" fill="#933040" opacity="0.8"/><circle cx="879.9" cy="417.7" r="0.99" fill="#a01c2c"/><circle cx="881.7" cy="418.1" r="0.87" fill="#b02030"/><circle cx="883.2" cy="423.6" r="0.87" fill="#8a2338" opacity="0.9"/><circle cx="876.0" cy="425.4" r="0.74" fill="#933040" opacity="0.8"/><circle cx="891.1" cy="419.5" r="0.99" fill="#a01c2c"/><circle cx="892.9" cy="419.9" r="0.87" fill="#b02030"/><circle cx="894.5" cy="425.5" r="0.87" fill="#8a2338" opacity="0.9"/><circle cx="887.2" cy="427.2" r="0.74" fill="#933040" opacity="0.8"/><ellipse cx="778.3" cy="412.1" rx="1.86" ry="1.12" fill="#e8202a"/><ellipse cx="824.1" cy="419.8" rx="1.86" ry="1.12" fill="#e8202a"/><ellipse cx="869.8" cy="427.5" rx="1.86" ry="1.12" fill="#e8202a"/><circle cx="799.9" cy="402.5" r="0.99" fill="#3f8f74"/><circle cx="856.4" cy="411.7" r="0.99" fill="#3f8f74"/><circle cx="896.7" cy="418.8" r="1.18" fill="#e0141a"/>
<polygon points="911.6,421.7 1063.5,446.5 1063.5,458.0 911.6,432.6" fill="#7fbfe0" opacity="0.17"/><polyline points="915.4,431.5 921.7,424.7 928.1,433.6 934.4,426.7 940.7,435.7 947.0,428.8 953.4,437.8 959.7,430.9 966.0,440.0 972.4,433.0 978.7,442.1 985.0,435.0 991.3,444.2 997.7,437.1 1004.0,446.3 1010.3,439.2 1016.7,448.4 1023.0,441.3 1029.3,450.5 1035.7,443.3 1042.0,452.6 1048.3,445.4 1054.6,454.7 1061.0,447.5" fill="none" stroke="#35a6d6" stroke-width="1.17" opacity="0.15" stroke-linejoin="round"/><line x1="917.9" y1="424.3" x2="916.7" y2="431.7" stroke="#38aada" stroke-width="1.17"/><line x1="930.6" y1="426.3" x2="929.3" y2="433.8" stroke="#38aada" stroke-width="1.17"/><line x1="943.2" y1="428.4" x2="942.0" y2="435.9" stroke="#38aada" stroke-width="1.17"/><line x1="955.9" y1="430.5" x2="954.6" y2="438.1" stroke="#38aada" stroke-width="1.17"/><line x1="968.6" y1="432.6" x2="967.3" y2="440.2" stroke="#38aada" stroke-width="1.17"/><line x1="981.2" y1="434.6" x2="980.0" y2="442.3" stroke="#38aada" stroke-width="1.17"/><line x1="993.9" y1="436.7" x2="992.6" y2="444.4" stroke="#38aada" stroke-width="1.17"/><line x1="1006.5" y1="438.8" x2="1005.3" y2="446.5" stroke="#38aada" stroke-width="1.17"/><line x1="1019.2" y1="440.9" x2="1017.9" y2="448.6" stroke="#38aada" stroke-width="1.17"/><line x1="1031.9" y1="442.9" x2="1030.6" y2="450.7" stroke="#38aada" stroke-width="1.17"/><line x1="1044.5" y1="445.0" x2="1043.2" y2="452.8" stroke="#38aada" stroke-width="1.17"/><line x1="1057.2" y1="447.1" x2="1055.9" y2="454.9" stroke="#38aada" stroke-width="1.17"/><polyline points="911.6,431.3 917.9,424.0 924.3,433.4 930.6,426.1 936.9,435.5 943.2,428.2 949.6,437.7 955.9,430.3 962.2,439.8 968.6,432.3 974.9,441.9 981.2,434.4 987.5,444.0 993.9,436.5 1000.2,446.1 1006.5,438.6 1012.9,448.2 1019.2,440.6 1025.5,450.3 1031.9,442.7 1038.2,452.4 1044.5,444.8 1050.8,454.5 1057.2,446.8 1063.5,456.6" fill="none" stroke="#187ab4" stroke-width="1.69" opacity="1.0" stroke-linejoin="round"/><line x1="1063.5" y1="446.5" x2="1069.8" y2="456.3" stroke="#1b8fc4" stroke-width="1.43"/><line x1="911.6" y1="421.7" x2="904.9" y2="428.3" stroke="#1b8fc4" stroke-width="1.43"/><line x1="911.6" y1="421.7" x2="1063.5" y2="446.5" stroke="#1f6fd4" stroke-width="1.56"/><line x1="911.6" y1="430.0" x2="1063.5" y2="455.3" stroke="#1f6ecc" stroke-width="1.56"/><line x1="905.4" y1="431.6" x2="1069.3" y2="459.0" stroke="#1a62c4" stroke-width="2.03"/><circle cx="917.9" cy="424.3" r="1.04" fill="#a01c2c"/><circle cx="920.0" cy="424.7" r="0.91" fill="#b02030"/><circle cx="921.7" cy="430.2" r="0.91" fill="#8a2338" opacity="0.9"/><circle cx="913.5" cy="431.6" r="0.78" fill="#933040" opacity="0.8"/><circle cx="930.6" cy="426.3" r="1.04" fill="#a01c2c"/><circle cx="932.6" cy="426.8" r="0.91" fill="#b02030"/><circle cx="934.4" cy="432.3" r="0.91" fill="#8a2338" opacity="0.9"/><circle cx="926.2" cy="433.8" r="0.78" fill="#933040" opacity="0.8"/><circle cx="943.2" cy="428.4" r="1.04" fill="#a01c2c"/><circle cx="945.3" cy="428.9" r="0.91" fill="#b02030"/><circle cx="947.0" cy="434.4" r="0.91" fill="#8a2338" opacity="0.9"/><circle cx="938.8" cy="435.9" r="0.78" fill="#933040" opacity="0.8"/><circle cx="955.9" cy="430.5" r="1.04" fill="#a01c2c"/><circle cx="957.9" cy="430.9" r="0.91" fill="#b02030"/><circle cx="959.7" cy="436.5" r="0.91" fill="#8a2338" opacity="0.9"/><circle cx="951.5" cy="438.0" r="0.78" fill="#933040" opacity="0.8"/><circle cx="968.6" cy="432.6" r="1.04" fill="#a01c2c"/><circle cx="970.6" cy="433.0" r="0.91" fill="#b02030"/><circle cx="972.4" cy="438.5" r="0.91" fill="#8a2338" opacity="0.9"/><circle cx="964.1" cy="440.1" r="0.78" fill="#933040" opacity="0.8"/><circle cx="981.2" cy="434.6" r="1.04" fill="#a01c2c"/><circle cx="983.2" cy="435.1" r="0.91" fill="#b02030"/><circle cx="985.0" cy="440.6" r="0.91" fill="#8a2338" opacity="0.9"/><circle cx="976.8" cy="442.2" r="0.78" fill="#933040" opacity="0.8"/><circle cx="993.9" cy="436.7" r="1.04" fill="#a01c2c"/><circle cx="995.9" cy="437.2" r="0.91" fill="#b02030"/><circle cx="997.7" cy="442.7" r="0.91" fill="#8a2338" opacity="0.9"/><circle cx="989.4" cy="444.3" r="0.78" fill="#933040" opacity="0.8"/><circle cx="1006.5" cy="438.8" r="1.04" fill="#a01c2c"/><circle cx="1008.6" cy="439.2" r="0.91" fill="#b02030"/><circle cx="1010.3" cy="444.8" r="0.91" fill="#8a2338" opacity="0.9"/><circle cx="1002.1" cy="446.4" r="0.78" fill="#933040" opacity="0.8"/><circle cx="1019.2" cy="440.9" r="1.04" fill="#a01c2c"/><circle cx="1021.2" cy="441.3" r="0.91" fill="#b02030"/><circle cx="1023.0" cy="446.9" r="0.91" fill="#8a2338" opacity="0.9"/><circle cx="1014.8" cy="448.5" r="0.78" fill="#933040" opacity="0.8"/><circle cx="1031.9" cy="442.9" r="1.04" fill="#a01c2c"/><circle cx="1033.9" cy="443.4" r="0.91" fill="#b02030"/><circle cx="1035.7" cy="449.0" r="0.91" fill="#8a2338" opacity="0.9"/><circle cx="1027.4" cy="450.6" r="0.78" fill="#933040" opacity="0.8"/><circle cx="1044.5" cy="445.0" r="1.04" fill="#a01c2c"/><circle cx="1046.5" cy="445.5" r="0.91" fill="#b02030"/><circle cx="1048.3" cy="451.1" r="0.91" fill="#8a2338" opacity="0.9"/><circle cx="1040.1" cy="452.7" r="0.78" fill="#933040" opacity="0.8"/><circle cx="1057.2" cy="447.1" r="1.04" fill="#a01c2c"/><circle cx="1059.2" cy="447.5" r="0.91" fill="#b02030"/><circle cx="1061.0" cy="453.2" r="0.91" fill="#8a2338" opacity="0.9"/><circle cx="1052.7" cy="454.9" r="0.78" fill="#933040" opacity="0.8"/><ellipse cx="929.8" cy="437.6" rx="1.95" ry="1.17" fill="#e8202a"/><ellipse cx="981.5" cy="446.3" rx="1.95" ry="1.17" fill="#e8202a"/><ellipse cx="1033.1" cy="454.9" rx="1.95" ry="1.17" fill="#e8202a"/><circle cx="954.1" cy="428.0" r="1.04" fill="#3f8f74"/><circle cx="1017.9" cy="438.5" r="1.04" fill="#3f8f74"/><circle cx="1063.5" cy="446.5" r="1.23" fill="#e0141a"/>
<line x1="302.7" y1="281.4" x2="305.8" y2="329.3" stroke="#f6f6f6" stroke-width="2.0"/><line x1="302.7" y1="281.4" x2="305.8" y2="329.3" stroke="#c4c4c4" stroke-width="2.0" stroke-dasharray="0.6 1.7"/><line x1="301.7" y1="281.4" x2="304.8" y2="329.3" stroke="#cfcfcf" stroke-width="0.5"/><line x1="303.7" y1="281.4" x2="306.8" y2="329.3" stroke="#a8a8a8" stroke-width="0.7"/><line x1="296.2" y1="288.9" x2="304.6" y2="289.6" stroke="#484848" stroke-width="0.9" opacity="0.85"/><line x1="297.2" y1="304.9" x2="305.6" y2="305.6" stroke="#484848" stroke-width="0.9" opacity="0.85"/><line x1="298.3" y1="320.8" x2="306.7" y2="321.5" stroke="#484848" stroke-width="0.9" opacity="0.85"/>
<polygon points="287.1,118.4 287.7,118.4 289.6,138.7 288.4,138.7" fill="#2392bd"/><polygon points="288.3,138.7 289.7,138.7 294.4,200.8 292.2,200.8" fill="#1a82ae"/><polygon points="292.1,200.8 294.5,200.8 301.1,281.4 297.7,281.4" fill="#1a82ae"/><polygon points="297.6,281.4 301.1,281.4 305.1,331.3 300.9,331.3" fill="#1a82ae"/><line x1="293.5" y1="200.8" x2="303.3" y2="331.3" stroke="#2aa0cc" stroke-width="0.9" opacity="0.3"/><ellipse cx="289.0" cy="138.7" rx="1.3" ry="0.9" fill="#1f7f86"/><ellipse cx="293.3" cy="200.8" rx="2.2" ry="1.0" fill="#1f7f86"/><ellipse cx="298.79999999999995" cy="281.4" rx="2.8" ry="0.8" fill="#e0141a"/><ellipse cx="298.6" cy="292.9" rx="1.1" ry="0.6" fill="#e0141a"/>
<polygon points="297.8,331.8 305.7,332.1 303.8,335.5 300.0,335.5" fill="#18aeb0"/><ellipse cx="298.7" cy="331.6" rx="2.0" ry="1.0" fill="#e0141a"/><ellipse cx="305.5" cy="330.9" rx="1.6" ry="0.8" fill="#e0141a"/><line x1="298.2" y1="332.1" x2="304.7" y2="332.6" stroke="#e0141a" stroke-width="1.00"/><line x1="303.7" y1="332.6" x2="303.0" y2="335.3" stroke="#c01820" stroke-width="0.75"/><ellipse cx="301.8" cy="330.5" rx="2.5" ry="0.9" fill="#23a09c"/><line x1="300.2" y1="330.8" x2="304.0" y2="331.0" stroke="#b03030" stroke-width="0.5"/>
<line x1="400.7" y1="305.7" x2="403.7" y2="348.8" stroke="#f6f6f6" stroke-width="2.0"/><line x1="400.7" y1="305.7" x2="403.7" y2="348.8" stroke="#c4c4c4" stroke-width="2.0" stroke-dasharray="0.6 1.7"/><line x1="399.7" y1="305.7" x2="402.7" y2="348.8" stroke="#cfcfcf" stroke-width="0.5"/><line x1="401.7" y1="305.7" x2="404.7" y2="348.8" stroke="#a8a8a8" stroke-width="0.7"/><line x1="393.9" y1="312.4" x2="402.6" y2="313.1" stroke="#484848" stroke-width="0.9" opacity="0.85"/><line x1="394.9" y1="326.8" x2="403.6" y2="327.4" stroke="#484848" stroke-width="0.9" opacity="0.85"/><line x1="395.9" y1="341.1" x2="404.6" y2="341.8" stroke="#484848" stroke-width="0.9" opacity="0.85"/>
<polygon points="395.1,305.7 399.3,305.7 402.2,346.8 397.8,346.8" fill="#1a82ae"/><line x1="397.5" y1="305.7" x2="400.3" y2="346.8" stroke="#2aa0cc" stroke-width="1.3" opacity="0.22"/><ellipse cx="396.7" cy="305.7" rx="3.5" ry="1.0" fill="#e0141a"/><ellipse cx="396.3" cy="316.8" rx="2.0" ry="0.5" fill="#e0141a"/>
<polygon points="394.0,347.4 403.4,347.8 401.2,351.8 396.6,351.8" fill="#18aeb0"/><ellipse cx="395.0" cy="347.1" rx="2.4" ry="1.2" fill="#e0141a"/><ellipse cx="403.2" cy="346.3" rx="1.9" ry="1.0" fill="#e0141a"/><line x1="394.4" y1="347.8" x2="402.2" y2="348.3" stroke="#e0141a" stroke-width="1.20"/><line x1="401.0" y1="348.3" x2="400.2" y2="351.6" stroke="#c01820" stroke-width="0.90"/><ellipse cx="398.8" cy="345.8" rx="3.0" ry="1.1" fill="#23a09c"/><line x1="396.8" y1="346.2" x2="401.4" y2="346.4" stroke="#b03030" stroke-width="0.5"/>
<line x1="507.9" y1="321.4" x2="509.7" y2="366.9" stroke="#f6f6f6" stroke-width="2.0"/><line x1="507.9" y1="321.4" x2="509.7" y2="366.9" stroke="#c4c4c4" stroke-width="2.0" stroke-dasharray="0.6 1.7"/><line x1="506.9" y1="321.4" x2="508.7" y2="366.9" stroke="#cfcfcf" stroke-width="0.5"/><line x1="508.9" y1="321.4" x2="510.7" y2="366.9" stroke="#a8a8a8" stroke-width="0.7"/><line x1="500.8" y1="328.5" x2="509.6" y2="329.2" stroke="#484848" stroke-width="0.9" opacity="0.85"/><line x1="501.4" y1="343.6" x2="510.2" y2="344.3" stroke="#484848" stroke-width="0.9" opacity="0.85"/><line x1="502.0" y1="358.8" x2="510.8" y2="359.5" stroke="#484848" stroke-width="0.9" opacity="0.85"/>
<polygon points="502.1,321.4 506.5,321.4 508.2,364.9 503.6,364.9" fill="#1a82ae"/><line x1="504.6" y1="321.4" x2="506.2" y2="364.9" stroke="#2aa0cc" stroke-width="1.4" opacity="0.22"/><ellipse cx="503.8" cy="321.4" rx="3.7" ry="1.0" fill="#e0141a"/><ellipse cx="503.0" cy="333.1" rx="2.1" ry="0.5" fill="#e0141a"/>
<polygon points="499.7,365.5 509.5,365.9 507.2,370.1 502.4,370.1" fill="#18aeb0"/><ellipse cx="500.7" cy="365.2" rx="2.5" ry="1.3" fill="#e0141a"/><ellipse cx="509.3" cy="364.4" rx="2.0" ry="1.0" fill="#e0141a"/><line x1="500.1" y1="365.9" x2="508.2" y2="366.5" stroke="#e0141a" stroke-width="1.25"/><line x1="507.0" y1="366.5" x2="506.2" y2="369.9" stroke="#c01820" stroke-width="0.94"/><ellipse cx="504.7" cy="363.9" rx="3.1" ry="1.1" fill="#23a09c"/><line x1="502.6" y1="364.3" x2="507.4" y2="364.5" stroke="#b03030" stroke-width="0.5"/>
<line x1="627.2" y1="339.2" x2="628.4" y2="387.2" stroke="#f6f6f6" stroke-width="2.0"/><line x1="627.2" y1="339.2" x2="628.4" y2="387.2" stroke="#c4c4c4" stroke-width="2.0" stroke-dasharray="0.6 1.7"/><line x1="626.2" y1="339.2" x2="627.4" y2="387.2" stroke="#cfcfcf" stroke-width="0.5"/><line x1="628.2" y1="339.2" x2="629.4" y2="387.2" stroke="#a8a8a8" stroke-width="0.7"/><line x1="619.9" y1="346.7" x2="628.8" y2="347.4" stroke="#484848" stroke-width="0.9" opacity="0.85"/><line x1="620.3" y1="362.7" x2="629.2" y2="363.4" stroke="#484848" stroke-width="0.9" opacity="0.85"/><line x1="620.7" y1="378.7" x2="629.6" y2="379.4" stroke="#484848" stroke-width="0.9" opacity="0.85"/>
<polygon points="621.2,339.2 625.8,339.2 626.9,385.2 622.1,385.2" fill="#1a82ae"/><line x1="623.8" y1="339.2" x2="624.8" y2="385.2" stroke="#2aa0cc" stroke-width="1.4" opacity="0.22"/><ellipse cx="623.0" cy="339.2" rx="3.8" ry="1.1" fill="#e0141a"/><ellipse cx="622.0" cy="351.6" rx="2.2" ry="0.5" fill="#e0141a"/>
<polygon points="618.0,385.9 628.3,386.3 625.9,390.7 620.9,390.7" fill="#18aeb0"/><ellipse cx="619.1" cy="385.5" rx="2.6" ry="1.4" fill="#e0141a"/><ellipse cx="628.1" cy="384.7" rx="2.1" ry="1.1" fill="#e0141a"/><line x1="618.5" y1="386.3" x2="627.0" y2="386.8" stroke="#e0141a" stroke-width="1.31"/><line x1="625.7" y1="386.8" x2="624.8" y2="390.4" stroke="#c01820" stroke-width="0.98"/><ellipse cx="623.3" cy="384.1" rx="3.3" ry="1.2" fill="#23a09c"/><line x1="621.1" y1="384.5" x2="626.1" y2="384.8" stroke="#b03030" stroke-width="0.5"/>
<line x1="760.2" y1="359.0" x2="760.5" y2="408.9" stroke="#f6f6f6" stroke-width="2.0"/><line x1="760.2" y1="359.0" x2="760.5" y2="408.9" stroke="#c4c4c4" stroke-width="2.0" stroke-dasharray="0.6 1.7"/><line x1="759.2" y1="359.0" x2="759.5" y2="408.9" stroke="#cfcfcf" stroke-width="0.5"/><line x1="761.2" y1="359.0" x2="761.5" y2="408.9" stroke="#a8a8a8" stroke-width="0.7"/><line x1="752.6" y1="366.8" x2="761.7" y2="367.5" stroke="#484848" stroke-width="0.9" opacity="0.85"/><line x1="752.7" y1="383.4" x2="761.8" y2="384.1" stroke="#484848" stroke-width="0.9" opacity="0.85"/><line x1="752.9" y1="400.1" x2="761.9" y2="400.8" stroke="#484848" stroke-width="0.9" opacity="0.85"/>
<polygon points="754.0,359.0 758.8,359.0 759.0,406.9 754.0,406.9" fill="#1a82ae"/><line x1="756.7" y1="359.0" x2="756.8" y2="406.9" stroke="#2aa0cc" stroke-width="1.5" opacity="0.22"/><ellipse cx="755.9" cy="359.0" rx="4.1" ry="1.1" fill="#e0141a"/><ellipse cx="754.5" cy="371.9" rx="2.3" ry="0.5" fill="#e0141a"/>
<polygon points="749.7,407.6 760.6,408.1 758.0,412.7 752.7,412.7" fill="#18aeb0"/><ellipse cx="750.9" cy="407.2" rx="2.8" ry="1.4" fill="#e0141a"/><ellipse cx="760.4" cy="406.3" rx="2.2" ry="1.2" fill="#e0141a"/><line x1="750.2" y1="408.1" x2="759.2" y2="408.6" stroke="#e0141a" stroke-width="1.39"/><line x1="757.8" y1="408.6" x2="756.9" y2="412.5" stroke="#c01820" stroke-width="1.04"/><ellipse cx="755.3" cy="405.7" rx="3.5" ry="1.3" fill="#23a09c"/><line x1="753.0" y1="406.2" x2="758.3" y2="406.4" stroke="#b03030" stroke-width="0.5"/>
<line x1="909.3" y1="380.7" x2="908.6" y2="433.8" stroke="#f6f6f6" stroke-width="2.0"/><line x1="909.3" y1="380.7" x2="908.6" y2="433.8" stroke="#c4c4c4" stroke-width="2.0" stroke-dasharray="0.6 1.7"/><line x1="908.3" y1="380.7" x2="907.6" y2="433.8" stroke="#cfcfcf" stroke-width="0.5"/><line x1="910.3" y1="380.7" x2="909.6" y2="433.8" stroke="#a8a8a8" stroke-width="0.7"/><line x1="901.4" y1="386.8" x2="910.7" y2="387.5" stroke="#484848" stroke-width="0.9" opacity="0.85"/><line x1="901.2" y1="400.1" x2="910.5" y2="400.8" stroke="#484848" stroke-width="0.9" opacity="0.85"/><line x1="901.1" y1="413.4" x2="910.3" y2="414.1" stroke="#484848" stroke-width="0.9" opacity="0.85"/><line x1="900.9" y1="426.7" x2="910.1" y2="427.4" stroke="#484848" stroke-width="0.9" opacity="0.85"/>
<polygon points="902.7,380.7 907.9,380.7 907.1,431.8 901.6,431.8" fill="#1a82ae"/><line x1="905.6" y1="380.7" x2="904.7" y2="431.8" stroke="#2aa0cc" stroke-width="1.6" opacity="0.22"/><ellipse cx="904.8" cy="380.7" rx="4.4" ry="1.2" fill="#e0141a"/><ellipse cx="903.0" cy="394.5" rx="2.5" ry="0.5" fill="#e0141a"/>
<polygon points="897.1,432.6 908.9,433.1 906.1,438.1 900.4,438.1" fill="#18aeb0"/><ellipse cx="898.4" cy="432.2" rx="3.0" ry="1.6" fill="#e0141a"/><ellipse cx="908.6" cy="431.2" rx="2.4" ry="1.2" fill="#e0141a"/><line x1="897.6" y1="433.1" x2="907.4" y2="433.7" stroke="#e0141a" stroke-width="1.50"/><line x1="905.9" y1="433.7" x2="904.9" y2="437.8" stroke="#c01820" stroke-width="1.12"/><ellipse cx="903.1" cy="430.6" rx="3.8" ry="1.4" fill="#23a09c"/><line x1="900.6" y1="431.1" x2="906.4" y2="431.3" stroke="#b03030" stroke-width="0.5"/>
<line x1="1078.8" y1="405.7" x2="1076.8" y2="461.8" stroke="#f6f6f6" stroke-width="2.0"/><line x1="1078.8" y1="405.7" x2="1076.8" y2="461.8" stroke="#c4c4c4" stroke-width="2.0" stroke-dasharray="0.6 1.7"/><line x1="1077.8" y1="405.7" x2="1075.8" y2="461.8" stroke="#cfcfcf" stroke-width="0.5"/><line x1="1079.8" y1="405.7" x2="1077.8" y2="461.8" stroke="#a8a8a8" stroke-width="0.7"/><line x1="1070.5" y1="412.2" x2="1080.0" y2="412.9" stroke="#484848" stroke-width="0.9" opacity="0.85"/><line x1="1070.0" y1="426.2" x2="1079.5" y2="426.9" stroke="#484848" stroke-width="0.9" opacity="0.85"/><line x1="1069.5" y1="440.3" x2="1079.0" y2="441.0" stroke="#484848" stroke-width="0.9" opacity="0.85"/><line x1="1069.0" y1="454.3" x2="1078.5" y2="455.0" stroke="#484848" stroke-width="0.9" opacity="0.85"/>
<polygon points="1070.7,405.7 1077.7,405.7 1074.5,459.8 1068.7,459.8" fill="#1a82ae"/><line x1="1074.5" y1="405.7" x2="1071.9" y2="459.8" stroke="#2aa0cc" stroke-width="1.7" opacity="0.22"/><ellipse cx="1074.0" cy="405.7" rx="5.9" ry="1.3" fill="#e0141a"/><ellipse cx="1071.6" cy="420.3" rx="2.6" ry="0.5" fill="#e0141a"/>
<polygon points="1064.5,460.6 1077.3,461.2 1074.3,466.6 1068.0,466.6" fill="#18aeb0"/><polygon points="1062.8,459.0 1067.2,457.6 1078.9,457.9 1079.5,459.5 1075.9,462.4 1065.6,462.4" fill="#e0141a" stroke="#e0141a" stroke-width="0.6" stroke-linejoin="round"/><line x1="1074.0" y1="461.8" x2="1072.9" y2="466.3" stroke="#c01820" stroke-width="1.23"/><ellipse cx="1071.0" cy="458.4" rx="4.1" ry="1.5" fill="#23a09c"/><line x1="1068.3" y1="459.0" x2="1074.6" y2="459.3" stroke="#b03030" stroke-width="0.5"/>
</g></g>
<g id="ui">
<rect x="4.3" y="4.3" width="12.2" height="10.8" rx="2.2" fill="#6f8cc0" stroke="#a9bad9" stroke-width="0.9"/>
<rect x="20.9" y="4.3" width="12.2" height="10.8" rx="2.2" fill="#6f8cc0" stroke="#a9bad9" stroke-width="0.9"/>
<rect x="37.4" y="4.3" width="12.2" height="10.8" rx="2.2" fill="#6f8cc0" stroke="#a9bad9" stroke-width="0.9"/>
<ellipse cx="10.4" cy="9.7" rx="4.5" ry="3.6" fill="#fff"/><line x1="8.6" y1="10.4" x2="11.6" y2="8.9" stroke="#2b579a" stroke-width="1"/>
<rect x="23.2" y="6.2" width="7.6" height="7.2" fill="#2b579a" stroke="#fff" stroke-width="1"/><path d="M25 11.5 L28.6 8 M28.8 11.2 L28.8 7.8 L25.6 7.8" stroke="#fff" stroke-width="1" fill="none"/>
<rect x="39.4" y="6" width="8" height="7.6" fill="#2b579a" stroke="#dfe6f2" stroke-width="0.8"/><path d="M40.8 7.4 L46.6 12.6" stroke="#fff" stroke-width="2.2" fill="none"/><path d="M42 12.2 L39.6 13.4 L40.6 10.6" fill="#fff"/>
<circle cx="60.3" cy="9.7" r="5.1" fill="none" stroke="#e8edf6" stroke-width="1"/>
<text x="60.3" y="12.6" font-family="Liberation Sans, sans-serif" font-size="8.6" font-weight="bold" fill="#fff" text-anchor="middle">?</text>
<rect x="71" y="8" width="3.8" height="0.8" fill="#e6ebf4"/><polygon points="71,9.8 74.8,9.8 72.9,11.9" fill="#e6ebf4"/>
<rect x="1200.4" y="9.2" width="4.4" height="1.3" fill="#d5dcea"/>
<rect x="1224.2" y="7.6" width="3.2" height="3.2" fill="none" stroke="#cfd7e6" stroke-width="0.9"/><path d="M1225.6 7.2 L1225.6 5.8 L1228.8 5.8 L1228.8 9 L1227.8 9" fill="none" stroke="#cfd7e6" stroke-width="0.8"/>
<path d="M1246.4 6 L1251.4 10.8 M1251.4 6 L1246.4 10.8" stroke="#dfe5f0" stroke-width="1" fill="none"/>
<path d="M1254.8 34.6 L1257.1 32.3 L1259.4 34.6" stroke="#fff" stroke-width="1.3" fill="none"/>
<path d="M39.3 61.8 A7 7 0 0 1 52.2 59.6" fill="none" stroke="#1f4e69" stroke-width="1.3"/>
<path d="M52.9 64.4 A7 7 0 0 1 39.9 66.6" fill="none" stroke="#1f4e69" stroke-width="1.3"/>
<polygon points="50.7,63 56.3,63 53.5,59.4" fill="#1f4e69"/>
<polygon points="36,63.2 41.6,63.2 38.8,66.8" fill="#1f4e69"/>
<polygon points="94.4,53.2 104.6,60 100.8,61.4 105.8,71.6 103.4,72.9 98.4,62.8 95.4,65.4" fill="#1f4e69"/>
<rect x="124.4" y="53.4" width="6" height="6" rx="1.8" fill="none" stroke="#1f4e69" stroke-width="0.9"/>
<rect x="138.3" y="53.4" width="6" height="6" rx="1.8" fill="none" stroke="#1f4e69" stroke-width="0.9"/>
<path d="M127.4 59.4 V63.2 H141.3 V59.4 M134.4 63.2 V67.2" fill="none" stroke="#1f4e69" stroke-width="0.9"/>
<polygon points="132.9,66 135.9,66 134.4,64" fill="#1f4e69"/>
<rect x="131.4" y="67.2" width="6" height="5.6" rx="1.6" fill="#fff" stroke="#1f4e69" stroke-width="0.9"/>
<rect x="167.2" y="57" width="20.6" height="6.8" fill="#fff"/>
<line x1="167" y1="57" x2="188" y2="57" stroke="#222" stroke-width="0.7"/>
<line x1="167" y1="63.6" x2="188" y2="63.6" stroke="#6a6ad8" stroke-width="1"/>
<line x1="167.2" y1="56.8" x2="167.2" y2="64" stroke="#555" stroke-width="0.6"/><line x1="187.8" y1="56.8" x2="187.8" y2="64" stroke="#555" stroke-width="0.6"/>
<line x1="168" y1="60.1" x2="187" y2="60.1" stroke="#e02020" stroke-width="0.7"/>
<polygon points="168,60.1 170.4,59 170.4,61.2" fill="#222"/><polygon points="187,60.1 184.6,59 184.6,61.2" fill="#222"/>
<polygon points="189.10,65.25 187.70,63.55 186.31,64.69 187.70,66.39" fill="#e0333a"/><polygon points="187.70,66.39 186.31,64.69 180.76,69.23 182.15,70.93" fill="#e9b43a"/><polygon points="182.15,70.93 180.76,69.23 179.60,71.60" fill="#8a6a3a"/><line x1="187.70" y1="63.55" x2="180.76" y2="69.23" stroke="#b98a20" stroke-width="0.4"/>
<polygon points="211.8,54.5 223.2,54.5 225.7,58.9 222.6,67.1 212.5,67.1 209.3,58.9" fill="#fff" stroke="#777" stroke-width="0.6"/>
<line x1="212.8" y1="65.8" x2="222.2" y2="65.8" stroke="#b02020" stroke-width="0.6"/>
<circle cx="214.2" cy="65.8" r="0.8" fill="#b02030"/>
<circle cx="216.4" cy="65.8" r="0.8" fill="#b02030"/>
<circle cx="218.6" cy="65.8" r="0.8" fill="#b02030"/>
<circle cx="220.8" cy="65.8" r="0.8" fill="#b02030"/>
<polygon points="230.11,66.24 228.69,64.56 227.31,65.71 228.73,67.40" fill="#e0333a"/><polygon points="228.73,67.40 227.31,65.71 221.93,70.22 223.35,71.90" fill="#e9b43a"/><polygon points="223.35,71.90 221.93,70.22 220.80,72.60" fill="#8a6a3a"/><line x1="228.69" y1="64.56" x2="221.93" y2="70.22" stroke="#b98a20" stroke-width="0.4"/>
<path d="M254.8 50.8 V75.2 M263.6 50.8 V75.2" stroke="#2e6480" stroke-width="1.1" fill="none"/>
<line x1="254.8" y1="53.4" x2="263.6" y2="53.4" stroke="#5a8aa3" stroke-width="0.8"/>
<line x1="254.8" y1="57.4" x2="263.6" y2="57.4" stroke="#5a8aa3" stroke-width="0.8"/>
<line x1="254.8" y1="61.4" x2="263.6" y2="61.4" stroke="#5a8aa3" stroke-width="0.8"/>
<line x1="254.8" y1="65.4" x2="263.6" y2="65.4" stroke="#5a8aa3" stroke-width="0.8"/>
<line x1="254.8" y1="69.4" x2="263.6" y2="69.4" stroke="#5a8aa3" stroke-width="0.8"/>
<line x1="254.8" y1="73.2" x2="263.6" y2="73.2" stroke="#5a8aa3" stroke-width="0.8"/>
<path d="M257.2 55.4 L260.6 54.6 L262.6 53.2 L263 58.4 L261.4 62 L262.4 65 L261.2 70 L258.6 70 L259.2 65.8 L256.6 67.2 L251.6 65.2 L251 63 L255 63.6 L256.6 61 L256.2 57.6 Z" fill="#454545"/>
<circle cx="259.6" cy="55.6" r="1.9" fill="#454545"/>
<polygon points="271.13,66.23 269.67,64.57 268.32,65.76 269.77,67.41" fill="#e0333a"/><polygon points="269.77,67.41 268.32,65.76 263.28,70.19 264.73,71.84" fill="#e9b43a"/><polygon points="264.73,71.84 263.28,70.19 262.20,72.60" fill="#8a6a3a"/><line x1="269.67" y1="64.57" x2="263.28" y2="70.19" stroke="#b98a20" stroke-width="0.4"/>
<polygon points="292.7,59.6 300.9,53.4 309.1,59.6 300.9,65.8" fill="#1f4e69"/>
<path d="M292.7 63 L300.9 69.2 L309.1 63" fill="none" stroke="#5b86a0" stroke-width="0.6"/>
<path d="M292.7 66.2 L300.9 72.4 L309.1 66.2" fill="none" stroke="#5b86a0" stroke-width="0.6"/>
<path d="M313.3 61.2 V68.4" stroke="#1f4e69" stroke-width="1.3" fill="none"/><path d="M311.9 58.6 V60.4 Q313.3 61.8 314.7 60.4 V58.6" stroke="#1f4e69" stroke-width="0.9" fill="none"/>
<rect x="333.7" y="53.6" width="21.5" height="19.4" fill="#1f4e69"/>
<text x="344.4" y="67.2" font-family="Liberation Sans, sans-serif" font-size="11.4" fill="#fff" text-anchor="middle" textLength="13.2" lengthAdjust="spacingAndGlyphs">2D</text>
<polygon points="365.9,60.8 371.4,53.3 386.2,53.3 386.2,65 381.7,72.8 365.9,72.8" fill="#1f4e69"/>
<path d="M365.9 60.8 H381.7 V72.8 M381.7 60.8 L386.2 53.3" fill="none" stroke="#8fb0c4" stroke-width="0.6"/>
<text x="373.8" y="70.4" font-family="Liberation Sans, sans-serif" font-size="8.4" font-weight="bold" fill="#fff" text-anchor="middle" textLength="10.6" lengthAdjust="spacingAndGlyphs">3D</text>
<polygon points="98.4,97.3 101.6,97.3 100,99.2" fill="#666"/>
<path fill-rule="evenodd" fill="#bfbfbf" d="M1218.1 653.4 a20.9 8.2 0 1 0 41.8 0 a20.9 8.2 0 1 0 -41.8 0 Z M1223 652.7 a16 5.7 0 1 0 32 0 a16 5.7 0 1 0 -32 0 Z"/>
<polygon points="1227.3,635.8 1236.4,633.9 1249.9,635.1 1242.2,637.3" fill="#8a8af0"/>
<polygon points="1227.3,635.8 1242.2,637.3 1241.9,655.1 1228,651.5" fill="#7dbf7d"/>
<polygon points="1242.2,637.3 1249.9,635.1 1249.1,650 1241.9,655.1" fill="#f47c7c"/>
<text x="1234.7" y="650.4" font-family="Liberation Sans, sans-serif" font-size="10.5" fill="#e8f4e8" text-anchor="middle" textLength="6.4" lengthAdjust="spacingAndGlyphs">R</text>
<text x="1245.7" y="648.6" font-family="Liberation Sans, sans-serif" font-size="10" fill="#fdeaea" text-anchor="middle" textLength="3.4" lengthAdjust="spacingAndGlyphs">F</text>
<rect x="1261.2" y="641.4" width="6.4" height="39.4" rx="1.5" fill="#4c5661"/>
<rect x="1263.2" y="645" width="2.2" height="33.5" fill="#2a2f3a"/>
<rect x="1263.7" y="650.0" width="1.3" height="2.0" fill="#c88a2a" opacity="0.85"/>
<rect x="1263.7" y="653.1" width="1.3" height="2.0" fill="#d0a020" opacity="0.85"/>
<rect x="1263.7" y="656.2" width="1.3" height="2.0" fill="#c4b030" opacity="0.85"/>
<rect x="1263.7" y="659.3" width="1.3" height="2.0" fill="#8ab060" opacity="0.85"/>
<rect x="1263.7" y="662.4" width="1.3" height="2.0" fill="#5ab0a0" opacity="0.85"/>
<rect x="1263.7" y="665.5" width="1.3" height="2.0" fill="#38a8c8" opacity="0.85"/>
<rect x="1263.7" y="668.6" width="1.3" height="2.0" fill="#2aa0d8" opacity="0.85"/>
<rect x="1263.7" y="671.7" width="1.3" height="2.0" fill="#2a9ad8" opacity="0.85"/>
<rect x="1263.7" y="674.8" width="1.3" height="2.0" fill="#2a98d8" opacity="0.85"/>
<rect x="4" y="657" width="88" height="11" fill="#f0f0f0"/>
<defs><linearGradient id="sg" x1="0" y1="0" x2="0" y2="1"><stop offset="0" stop-color="#f4f4f4"/><stop offset="0.5" stop-color="#dedede"/><stop offset="1" stop-color="#c4c4c4"/></linearGradient></defs>
<rect x="16.8" y="657.6" width="57.4" height="9.4" rx="1.2" fill="url(#sg)" stroke="#a6a6a6" stroke-width="0.6"/>
<path d="M44 660.4 V664.6 M45.5 660.4 V664.6 M47 660.4 V664.6" stroke="#555" stroke-width="0.6"/>
<polygon points="10.6,660.2 10.6,664.4 8.2,662.3" fill="#555"/><polygon points="85.2,660.2 85.2,664.4 87.6,662.3" fill="#555"/>
</g>
<g id="tl" stroke="#9c9c9c" stroke-width="0.7" stroke-dasharray="0.8 0.8" fill="none"><path d="M16 144.0 H20.5"/><path d="M25.4 148.0 V150.3 M28.6 153.3 H32.5"/><path d="M37.8 157.3 V335.9"/><path d="M41 162.6 H44.6"/><path d="M41 190.4 H44.6"/><path d="M41 218.2 H44.6"/><path d="M41 236.8 H44.6"/><path d="M41 264.6 H44.6"/><path d="M41 292.5 H44.6"/><path d="M41 311.0 H44.6"/><path d="M41 338.9 H44.6"/><path d="M50.6 167.1 V181.1"/><path d="M50.6 171.8 H56.4"/><path d="M50.6 181.1 H56.4"/><path d="M50.6 194.9 V209.0"/><path d="M50.6 199.7 H56.4"/><path d="M50.6 209.0 H56.4"/><path d="M50.6 222.7 V227.5"/><path d="M50.6 227.5 H56.4"/><path d="M50.6 241.3 V255.4"/><path d="M50.6 246.1 H56.4"/><path d="M50.6 255.4 H56.4"/><path d="M50.6 269.1 V283.2"/><path d="M50.6 273.9 H56.4"/><path d="M50.6 283.2 H56.4"/><path d="M50.6 297.0 V301.8"/><path d="M50.6 301.8 H56.4"/><path d="M50.6 315.5 V329.6"/><path d="M50.6 320.3 H56.4"/><path d="M50.6 329.6 H56.4"/><path d="M50.6 343.4 V376.0"/><path d="M50.6 348.2 H56.4"/><path d="M50.6 357.4 H56.4"/><path d="M50.6 366.7 H56.4"/><path d="M50.6 376.0 H56.4"/></g>
</svg>
<div class="st" style="left:5.5px">就绪</div>
<div class="st" style="left:1152px;width:100px;text-align:right">单位KN-mm</div>
<div id="topline" class="abs"></div><div id="bl" class="abs"></div><div id="br" class="abs"></div><div id="bb" class="abs"></div>
</body></html>
